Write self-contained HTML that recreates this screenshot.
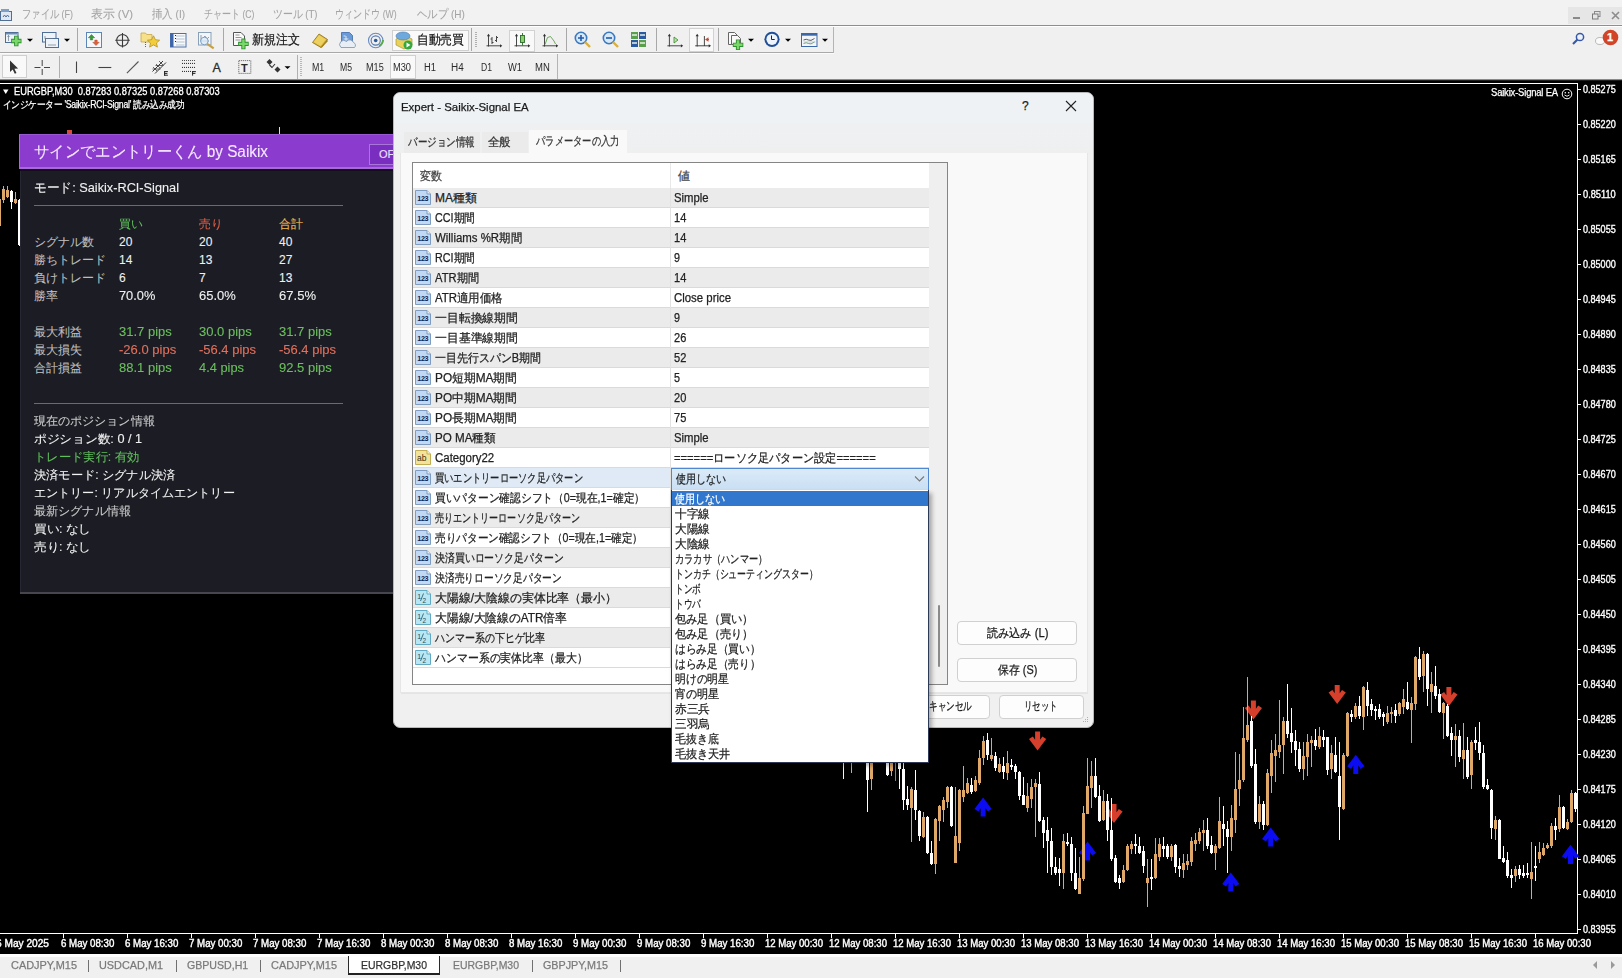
<!DOCTYPE html>
<html><head><meta charset="utf-8">
<style>
*{box-sizing:border-box}
html,body{margin:0;padding:0}
body{width:1622px;height:978px;overflow:hidden;position:relative;background:#f0f0f0;font-family:"Liberation Sans",sans-serif;color:#000}
.a{position:absolute}
.t{position:absolute;white-space:nowrap;line-height:1;-webkit-text-stroke:0.25px currentColor}
.menu{left:0;top:0;width:1622px;height:25px;background:#f2f2f2}
.menu .t{font-size:11.5px;color:#a4a4a4;top:8.5px;-webkit-text-stroke:0.1px currentColor}
.tb{background:#f0f0f0}
.sep{position:absolute;width:1px;background:#b9b9b9}
.tf{position:absolute;font-size:10px;color:#2a2a2a;top:63px;line-height:1}
.chart{left:0;top:80px;width:1622px;height:876px;background:#000}
.px{position:absolute;left:1583px;font-size:10px;color:#fff;line-height:1;letter-spacing:0px;-webkit-text-stroke:0.35px #fff}
.tx{position:absolute;top:938.5px;font-size:10px;color:#fff;line-height:1;-webkit-text-stroke:0.4px #fff}
.pn{-webkit-text-stroke:0.1px currentColor !important}
.tabs .t{font-size:11px;color:#7a7a7a;top:960px}
.tabs .sp{position:absolute;top:960px;width:1px;height:12px;background:#707070}
</style></head><body>

<!-- menu bar -->
<div class="a menu">
 <svg class="a" style="left:0;top:8px" width="13" height="14" viewBox="0 0 13 14"><rect x="0.5" y="3.5" width="11" height="9" fill="#dfe8f2" stroke="#4f6f95"/><rect x="1" y="1" width="8" height="3" fill="#7fa0c4"/><path d="M3 9 l1.5 -2 l1.5 2 l1.5 -2 l1.5 2" stroke="#4f6f95" fill="none"/></svg>
 <div class="t" style="left:22px;--w:51px;transform:scaleX(0.7740);transform-origin:0 50%">ファイル (F)</div>
 <div class="t" style="left:91px;--w:42px;transform:scaleX(0.9875);transform-origin:0 50%">表示 (V)</div>
 <div class="t" style="left:152px;--w:33px;transform:scaleX(0.8670);transform-origin:0 50%">挿入 (I)</div>
 <div class="t" style="left:204px;--w:50.5px;transform:scaleX(0.7518);transform-origin:0 50%">チャート (C)</div>
 <div class="t" style="left:273px;--w:44.5px;transform:scaleX(0.8257);transform-origin:0 50%">ツール (T)</div>
 <div class="t" style="left:335px;--w:61.6px;transform:scaleX(0.7538);transform-origin:0 50%">ウィンドウ (W)</div>
 <div class="t" style="left:417px;--w:47.8px;transform:scaleX(0.8664);transform-origin:0 50%">ヘルプ (H)</div>
 <div class="a" style="left:1568px;top:7px;width:54px;height:17px;background:#e6e6e6"></div>
 <div class="a" style="left:1573px;top:17px;width:7px;height:1.5px;background:#8a8a8a"></div>
 <svg class="a" style="left:1592px;top:11px" width="9" height="9"><rect x="2.5" y="0.5" width="5.5" height="5" fill="none" stroke="#8a8a8a"/><rect x="0.5" y="3" width="5.5" height="5" fill="#e6e6e6" stroke="#7a7a7a"/></svg>
 <svg class="a" style="left:1611px;top:11px" width="9" height="9"><path d="M1 1 L8 8 M8 1 L1 8" stroke="#8c8c8c" stroke-width="1.6"/></svg>
</div>
<div class="a" style="left:0;top:25px;width:1622px;height:1px;background:#8e8e8e"></div>
<div class="a" style="left:0;top:26px;width:1622px;height:1px;background:#fff"></div>
<!-- toolbar rows -->
<div class="a tb" style="left:0;top:27px;width:1622px;height:53px"></div>
<div class="a" style="left:0;top:52px;width:834px;height:1px;background:#a9a9a9"></div>
<div class="a" style="left:0;top:53px;width:834px;height:1px;background:#fbfbfb"></div>
<div class="a" style="left:833px;top:27px;width:1px;height:26px;background:#b4b4b4"></div>
<div class="a" style="left:557px;top:54px;width:1px;height:25px;background:#b4b4b4"></div>
<div class="a" style="left:0;top:79px;width:1622px;height:1px;background:#8a8a8a"></div>

<!-- row1 icons -->
<svg class="a" style="left:0;top:27px" width="840" height="25" viewBox="0 27 840 25">
 <!-- new chart -->
 <rect x="5.5" y="32.5" width="12.5" height="10" fill="#eef3f9" stroke="#4d6f98"/>
 <rect x="6" y="33" width="11.5" height="1.5" fill="#6f8fb5"/>
 <path d="M8.5 35.5 v5.5 M7.5 37 l1 -1.5 l1 1.5" stroke="#6a7a8a" fill="none" stroke-width="0.7"/>
 <path d="M16.3 35.8 v10.4 M11.1 41 h10.4" stroke="#2e8f2e" stroke-width="4.4"/>
 <path d="M16.3 36.6 v8.8 M11.9 41 h8.8" stroke="#7ad86a" stroke-width="2.6"/>
 <path d="M27 38.8 h6 l-3 3z" fill="#000"/>
 <!-- profiles -->
 <rect x="42.5" y="32.5" width="13.5" height="9.5" fill="#eef3f9" stroke="#4d6f98"/>
 <rect x="45.5" y="38.5" width="13" height="9" fill="#eef3f9" stroke="#4d6f98"/>
 <path d="M45 36 v3 M45 38.5 h8 M48 45 h8" stroke="#6a7a8a" stroke-width="0.7"/>
 <path d="M64 38.8 h6 l-3 3z" fill="#000"/>
 <line x1="77.5" y1="28" x2="77.5" y2="51" stroke="#a8a8a8"/>
 <!-- market watch -->
 <rect x="86.5" y="32.5" width="15" height="15" fill="#f4f7fb" stroke="#5d86b8"/>
 <path d="M91.5 34.5 l3.2 3.2 h-2 v2.2 h-2.4 v-2.2 h-2z" fill="#3a9a3a" stroke="#2a7a2a" stroke-width="0.5"/>
 <path d="M96 45.5 l3.2 -3.2 h-2 v-2.2 h-2.4 v2.2 h-2z" fill="#e0603a" stroke="#b04a2a" stroke-width="0.5"/>
 <!-- crosshair -->
 <circle cx="122.5" cy="40.3" r="5.8" fill="none" stroke="#3a3a3a" stroke-width="1.1"/>
 <path d="M122.5 33 v14.6 M115.2 40.3 h14.6" stroke="#3a3a3a" stroke-width="1.1"/>
 <!-- navigator -->
 <path d="M141 33 h4.5 l1.2 1.5 h5.3 v7.5 h-11z" fill="#f6e08a" stroke="#c9a640" stroke-width="0.8"/>
 <path d="M145.5 42 v5.5" stroke="#444" stroke-width="0.8" stroke-dasharray="1 1"/>
 <path d="M153.5 35.8 l1.9 3.9 l4.2 0.5 l-3.1 2.8 l0.9 4.1 l-3.9 -2.2 l-3.9 2.2 l0.9 -4.1 l-3.1 -2.8 l4.2 -0.5z" fill="#f2cf3a" stroke="#b89020" stroke-width="0.8"/>
 <!-- terminal -->
 <rect x="170.5" y="33.5" width="15.5" height="13.5" fill="#f8fafd" stroke="#4a70a8"/>
 <rect x="170.5" y="33.5" width="3" height="13.5" fill="#3d65a8"/>
 <path d="M176 36 h8.5 M176 39 h8.5 M176 42 h8.5 M176 45 h8.5" stroke="#9aa8b8" stroke-width="0.7"/>
 <path d="M175 35.5 h1 M175 38.5 h1 M175 41.5 h1" stroke="#222" stroke-width="1"/>
 <!-- tester -->
 <rect x="198.5" y="32.5" width="12.5" height="12.5" fill="#f2f5f9" stroke="#8aa0b8"/>
 <path d="M201 35 v6 M201 41 h8 M203 38 l2 -2 l2 3 l2 -2" stroke="#6a7a8a" stroke-width="0.7" fill="none"/>
 <circle cx="204.4" cy="41" r="3.8" fill="#dcecf8" fill-opacity="0.8" stroke="#7aa0c8" stroke-width="1"/>
 <path d="M207.2 43.8 l6.5 4.5" stroke="#c8a040" stroke-width="2.2"/>
 <line x1="223.5" y1="28" x2="223.5" y2="51" stroke="#a8a8a8"/>
 <!-- new order -->
 <path d="M233.5 32.5 h7.5 l3.5 3.5 v9.5 h-11z" fill="#fafafa" stroke="#555"/>
 <path d="M235.5 35 h4 M235.5 37.5 h6 M235.5 40 h5" stroke="#888" stroke-width="0.9"/>
 <path d="M243.4 38.6 v10.6 M238.1 43.9 h10.6" stroke="#2e8f2e" stroke-width="4.2"/>
 <path d="M243.4 39.4 v9 M238.9 43.9 h9" stroke="#7ad86a" stroke-width="2.4"/>
 <!-- gold -->
 <path d="M312.5 42.5 l6.5 -8.5 l8.5 5.5 l-6.5 8z" fill="#d8b030" stroke="#8a6a10" stroke-width="0.8"/>
 <path d="M313.5 42 l5.5 -7 l7 4.5 l-5.5 6.5z" fill="#ecd060"/>
 <path d="M321 47.5 l6.5 -8 v2 l-6 6.5z" fill="#9a7a18"/>
 <!-- signals cloud -->
 <path d="M341.5 32.5 h8 l3 3 v8 h-11z" fill="#6a9ad8" stroke="#3a6aa8" stroke-width="0.8"/>
 <path d="M343.5 36 h2 M343.5 39 h5 M346 36 v5" stroke="#e8f0fa" stroke-width="0.9"/>
 <path d="M341 47.5 h13.5 a3 3 0 0 0 -1 -5 a4 4 0 0 0 -7 -1 a3 3 0 0 0 -5.5 6z" fill="#e8eef5" stroke="#7a90a8" stroke-width="0.8"/>
 <!-- radio -->
 <circle cx="375.7" cy="40.5" r="7.2" fill="none" stroke="#6a8ac0" stroke-width="1.1"/>
 <circle cx="375.7" cy="40.5" r="4.6" fill="none" stroke="#5478b0" stroke-width="1.1"/>
 <path d="M379 46 a7.2 7.2 0 0 0 4 -6" stroke="#5aaa4a" stroke-width="2" fill="none"/>
 <circle cx="375.7" cy="40.5" r="1.8" fill="#2a5a98"/>
 <!-- autotrading box -->
 <rect x="392.5" y="30.5" width="76" height="20" fill="#fafafa" stroke="#cfcfcf"/>
 <path d="M396 39 l8 -4 l8 4 v6 l-8 4 l-8 -4z" fill="#e8d25a" stroke="#9a8a30" stroke-width="0.6"/>
 <ellipse cx="403" cy="36" rx="7" ry="4" fill="#6fa8dc" stroke="#4a7ab0" stroke-width="0.6"/>
 <circle cx="408" cy="45" r="4.5" fill="#34a83a"/>
 <path d="M406.5 42.5 l4 2.5 l-4 2.5z" fill="#fff"/>
 <line x1="471.5" y1="28" x2="471.5" y2="51" stroke="#a8a8a8"/>
 <path d="M476 32 v16" stroke="#b0b0b0" stroke-width="2" stroke-dasharray="1 1"/>
 <!-- bar chart -->
 <path d="M488.5 35 V46.5 M486.5 45.8 H501.0" stroke="#333" stroke-width="0.9" fill="none"/><path d="M486.9 36.2 L488.5 33.8 L490.1 36.2z M500.0 44.2 L502.3 45.8 L500.0 47.4z" fill="#333"/>
 <path d="M492 37 v7 M490.5 39 h1.5 M492 42.5 h1.5 M496.5 36 v6 M495 40.5 h1.5 M496.5 37.5 h1.5" stroke="#444" stroke-width="1"/>
 <!-- candle chart selected -->
 <rect x="509.5" y="30.5" width="25" height="21" fill="#f9f9f9" stroke="#d2d2d2"/>
 <path d="M516.5 35 V46.5 M514.5 45.8 H529.0" stroke="#333" stroke-width="0.9" fill="none"/><path d="M514.9 36.2 L516.5 33.8 L518.1 36.2z M528.0 44.2 L530.3 45.8 L528.0 47.4z" fill="#333"/>
 <rect x="520.5" y="35.5" width="4" height="7" fill="#8ad06a" stroke="#2a6a2a" stroke-width="0.9"/>
 <path d="M522.5 33 v2.5 M522.5 42.5 v3" stroke="#2a6a2a" stroke-width="0.9"/>
 <!-- line chart -->
 <path d="M544.5 35 V46.5 M542.5 45.8 H557.0" stroke="#333" stroke-width="0.9" fill="none"/><path d="M542.9 36.2 L544.5 33.8 L546.1 36.2z M556.0 44.2 L558.3 45.8 L556.0 47.4z" fill="#333"/>
 <path d="M545 44.5 l2.5 -7 l3 -1 l3.5 4.5 l1.5 3" fill="none" stroke="#5aa04a" stroke-width="0.9"/>
 <line x1="566.5" y1="28" x2="566.5" y2="51" stroke="#a8a8a8"/>
 <!-- zoom in -->
 <circle cx="581" cy="38" r="5.7" fill="#d8e8f8" stroke="#3a78c0" stroke-width="1.6"/>
 <path d="M578 38 h6 M581 35 v6" stroke="#1f5aa8" stroke-width="1.6"/>
 <path d="M585 42 l5 5" stroke="#d9b040" stroke-width="2.4"/>
 <!-- zoom out -->
 <circle cx="609" cy="38" r="5.7" fill="#d8e8f8" stroke="#3a78c0" stroke-width="1.6"/>
 <path d="M606 38 h6" stroke="#1f5aa8" stroke-width="1.6"/>
 <path d="M613 42 l5 5" stroke="#d9b040" stroke-width="2.4"/>
 <!-- tile -->
 <rect x="631" y="32" width="7" height="7" fill="#5aa04a"/><rect x="639" y="32" width="7" height="7" fill="#2a5aa0"/>
 <rect x="631" y="40" width="7" height="7" fill="#2a5aa0"/><rect x="639" y="40" width="7" height="7" fill="#5aa04a"/>
 <path d="M632 35 h5 M640 43 h5 M632 43 h5 M640 35 h5" stroke="#e8f0e8" stroke-width="1.5"/>
 <line x1="656.5" y1="28" x2="656.5" y2="51" stroke="#a8a8a8"/>
 <!-- autoscroll -->
 <path d="M669.4 35 V46.5 M667.4 45.8 H681.9" stroke="#333" stroke-width="0.9" fill="none"/><path d="M667.8 36.2 L669.4 33.8 L671.0 36.2z M680.9 44.2 L683.1999999999999 45.8 L680.9 47.4z" fill="#333"/>
 <path d="M674 37 l4 3 l-4 3z" fill="#b8e0a8" stroke="#3a8a2a" stroke-width="0.8"/>
 <!-- chart shift selected -->
 <rect x="689.5" y="28.5" width="24" height="23" fill="#f9f9f9" stroke="#d2d2d2"/>
 <path d="M697.2 35 V46.5 M695.2 45.8 H709.7" stroke="#333" stroke-width="0.9" fill="none"/><path d="M695.6 36.2 L697.2 33.8 L698.8000000000001 36.2z M708.7 44.2 L711.0 45.8 L708.7 47.4z" fill="#333"/>
 <path d="M704.4 36 v10" stroke="#333" stroke-width="0.9"/>
 <path d="M705 39.5 l3.5 -2.2 v4.4z" fill="#c84a3a"/>
 <path d="M707 39.5 h2" stroke="#c84a3a"/>
 <line x1="718.5" y1="28" x2="718.5" y2="51" stroke="#a8a8a8"/>
 <!-- indicators -->
 <path d="M728.5 32.5 h6 l3 3 v9 h-9z" fill="#fafafa" stroke="#666"/>
 <path d="M731.5 35.5 h6 l3 3 v6 h-9z" fill="#fafafa" stroke="#666"/>
 <path d="M738 39.5 v10.5 M732.8 44.8 h10.5" stroke="#2e8f2e" stroke-width="4.2"/>
 <path d="M738 40.3 v8.9 M733.6 44.8 h8.9" stroke="#7ad86a" stroke-width="2.4"/>
 <path d="M748 38.8 h6 l-3 3z" fill="#000"/>
 <!-- clock -->
 <circle cx="772" cy="39.3" r="7.6" fill="#1f4f98"/>
 <circle cx="772" cy="39.3" r="5.6" fill="#eef4fb"/>
 <path d="M771.5 35.5 v4 h3.2" stroke="#222" stroke-width="1" fill="none"/>
 <path d="M785 38.8 h6 l-3 3z" fill="#000"/>
 <!-- templates -->
 <rect x="801.5" y="33.5" width="15.5" height="13" fill="#f2f6fa" stroke="#3b68a8"/>
 <rect x="801.5" y="33.5" width="15.5" height="2.2" fill="#3b68a8"/>
 <path d="M803.5 40 q3 -1.5 5 0 t6 -1.5" fill="none" stroke="#333" stroke-width="0.8"/>
 <path d="M803.5 43.5 q3 -1.5 5 0 t6 -1.5" fill="none" stroke="#4a9a3a" stroke-width="0.8"/>
 <path d="M803.5 42 h12" stroke="#9ab0c8" stroke-width="0.6"/>
 <path d="M822 38.8 h6 l-3 3z" fill="#000"/>
</svg>
<div class="t" style="left:252px;top:33.5px;font-size:12.5px;color:#1a1a1a;--w:48px;transform:scaleX(0.9231);transform-origin:0 50%">新規注文</div>
<div class="t" style="left:417px;top:33.5px;font-size:12.5px;color:#1a1a1a;--w:47px;transform:scaleX(0.9038);transform-origin:0 50%">自動売買</div>
<!-- right icons -->
<svg class="a" style="left:1568px;top:29px" width="54" height="20" viewBox="1568 29 54 20">
 <circle cx="1580" cy="37" r="3.6" fill="#eef3fb" stroke="#3558a8" stroke-width="1.5"/>
 <path d="M1577.5 39.5 l-4.5 4.5" stroke="#3558a8" stroke-width="2.2"/>
 <ellipse cx="1600" cy="41" rx="4.5" ry="3.5" fill="#fafafa" stroke="#aaa" stroke-width="0.8"/>
 <circle cx="1610.5" cy="37.5" r="7.8" fill="#d24428"/>
</svg>
<div class="t" style="left:1607px;top:32px;font-size:11px;font-weight:bold;color:#fff">1</div>
<!-- row2 icons -->
<svg class="a" style="left:0;top:53px" width="600" height="27" viewBox="0 53 600 27">
 <rect x="2.5" y="55.5" width="24" height="22" fill="#f9f9f9" stroke="#cfcfcf"/>
 <path d="M10 60.5 l0 11.5 l2.7 -2.6 l2.1 4.4 l1.7 -0.8 l-2.1 -4.2 l3.7 -0.2z" fill="#333"/>
 <path d="M42.2 60 v6 M42.2 69 v6 M34.5 67.5 h6 M44 67.5 h6" stroke="#444" stroke-width="1"/>
 <line x1="59.5" y1="56" x2="59.5" y2="78" stroke="#b0b0b0"/>
 <path d="M76.5 61.5 v11.5" stroke="#444" stroke-width="1.1"/>
 <path d="M98.4 67.5 h12.9" stroke="#444" stroke-width="1.1"/>
 <path d="M126.9 73.2 L138.5 61.5" stroke="#555" stroke-width="1.1"/>
 <path d="M152.5 71.5 L163 61 M155 73.5 L166 62.5" stroke="#333" stroke-width="1"/>
 <path d="M153 67 l4 4 M156 64 l4 4 M159 61 l4 4 M152.5 69 h8 M155.5 65.5 h8" stroke="#444" stroke-width="0.8"/>
 <path d="M164.6 71.1 v4.6 M164.1 71.6 h3.8 M164.1 73.4 h3.3 M164.1 75.2 h3.8" stroke="#222" stroke-width="1"/>
 <g fill="#333"><circle cx="182.5" cy="60.5" r="0.55"/><circle cx="184.5" cy="60.5" r="0.55"/><circle cx="186.5" cy="60.5" r="0.55"/><circle cx="188.5" cy="60.5" r="0.55"/><circle cx="190.5" cy="60.5" r="0.55"/><circle cx="192.5" cy="60.5" r="0.55"/><circle cx="194.5" cy="60.5" r="0.55"/><circle cx="182.5" cy="63.4" r="0.55"/><circle cx="184.5" cy="63.4" r="0.55"/><circle cx="186.5" cy="63.4" r="0.55"/><circle cx="188.5" cy="63.4" r="0.55"/><circle cx="190.5" cy="63.4" r="0.55"/><circle cx="192.5" cy="63.4" r="0.55"/><circle cx="194.5" cy="63.4" r="0.55"/><circle cx="182.5" cy="67.4" r="0.55"/><circle cx="184.5" cy="67.4" r="0.55"/><circle cx="186.5" cy="67.4" r="0.55"/><circle cx="188.5" cy="67.4" r="0.55"/><circle cx="190.5" cy="67.4" r="0.55"/><circle cx="192.5" cy="67.4" r="0.55"/><circle cx="194.5" cy="67.4" r="0.55"/><circle cx="182.5" cy="71.4" r="0.55"/><circle cx="184.5" cy="71.4" r="0.55"/><circle cx="186.5" cy="71.4" r="0.55"/><circle cx="188.5" cy="71.4" r="0.55"/><circle cx="190.5" cy="71.4" r="0.55"/></g>
 <path d="M192.6 71.1 v4.6 M192.1 71.6 h3.8 M192.1 73.4 h3.3" stroke="#222" stroke-width="1"/>
 <text x="212.5" y="72" font-size="12.5" font-family="Liberation Sans" fill="#2a2a2a" stroke="#2a2a2a" stroke-width="0.3">A</text>
 <rect x="238.8" y="60.6" width="12" height="12.8" fill="none" stroke="#444" stroke-width="0.9" stroke-dasharray="1 1"/>
 <text x="241" y="71.5" font-size="11" font-family="Liberation Sans" font-weight="bold" fill="#2a2a2a">T</text>
 <path d="M266.5 62 l3 -3 l3 3 l-3 3z M274.5 69.5 l3 -3 l3 3 l-3 3z" fill="#333"/>
 <path d="M269.5 65 l2.5 2.5 l3 -3.5" stroke="#333" stroke-width="1.1" fill="none"/>
 <path d="M284.5 66.3 h6 l-3 2.8z" fill="#000"/>
 <line x1="297.5" y1="55" x2="297.5" y2="79" stroke="#b0b0b0"/>
 <path d="M301 57 v20" stroke="#b8b8b8" stroke-width="2" stroke-dasharray="1 1"/>
 <rect x="390.5" y="55.5" width="25" height="23" fill="#f9f9f9" stroke="#d0d0d0"/>
</svg>
<div class="tf" style="left:312px;--w:12.3px;transform:scaleX(0.8845);transform-origin:0 50%">M1</div>
<div class="tf" style="left:340px;--w:12px;transform:scaleX(0.8629);transform-origin:0 50%">M5</div>
<div class="tf" style="left:366px;--w:17.7px;transform:scaleX(0.9099);transform-origin:0 50%">M15</div>
<div class="tf" style="left:393px;--w:18px;transform:scaleX(0.9253);transform-origin:0 50%">M30</div>
<div class="tf" style="left:424px;--w:12px;transform:scaleX(0.9377);transform-origin:0 50%">H1</div>
<div class="tf" style="left:451px;--w:12.7px;transform:scaleX(0.9924);transform-origin:0 50%">H4</div>
<div class="tf" style="left:481px;--w:11px;transform:scaleX(0.8596);transform-origin:0 50%">D1</div>
<div class="tf" style="left:508px;--w:14px;transform:scaleX(0.9333);transform-origin:0 50%">W1</div>
<div class="tf" style="left:535px;--w:14.8px;transform:scaleX(0.9510);transform-origin:0 50%">MN</div>

<!-- chart background -->
<div class="a chart"></div>
<div class="a" style="left:0;top:80px;width:1622px;height:1px;background:#1e1e1e"></div>
<div class="a" style="left:0;top:83px;width:1578px;height:1px;background:#fff"></div>
<div class="a" style="left:1577px;top:83px;width:1px;height:851px;background:#fff"></div>
<div class="a" style="left:0;top:933px;width:1578px;height:1px;background:#fff"></div>
<div class="a" style="left:0;top:954px;width:1622px;height:3px;background:#fdfdfd"></div>
<svg class="a" style="left:3px;top:89px" width="6" height="6"><path d="M0 0.5 H5.5 L2.75 5z" fill="#fff"/></svg>
<div class="t" style="left:14px;top:87px;font-size:10px;color:#fff;-webkit-text-stroke:0.3px #fff;--w:205.7px;transform:scaleX(0.9280);transform-origin:0 50%">EURGBP,M30&nbsp; 0.87283 0.87325 0.87268 0.87303</div>
<div class="t" style="left:3px;top:99.5px;font-size:10px;color:#fff;letter-spacing:-0.3px;--w:181px;transform:scaleX(0.8722);transform-origin:0 50%">インジケーター 'Saikix-RCI-Signal' 読み込み成功</div>
<div class="t" style="left:1491px;top:88px;font-size:10px;color:#fff;letter-spacing:-0.2px;--w:67px;transform:scaleX(0.9472);transform-origin:0 50%">Saikix-Signal EA</div>
<svg class="a" style="left:1561px;top:88px" width="12" height="12"><circle cx="6" cy="6" r="4.8" fill="none" stroke="#fff" stroke-width="1"/><circle cx="4.3" cy="4.8" r="0.8" fill="#fff"/><circle cx="7.7" cy="4.8" r="0.8" fill="#fff"/><path d="M3.5 7 q2.5 2.5 5 0" stroke="#fff" fill="none" stroke-width="0.9"/></svg>

<div class="a" style="left:1578px;top:89.2px;width:3px;height:1px;background:#fff"></div>
<div class="px" style="top:84.8px;--w:32.7px;transform:scaleX(0.9044);transform-origin:0 50%">0.85275</div>
<div class="a" style="left:1578px;top:124.2px;width:3px;height:1px;background:#fff"></div>
<div class="px" style="top:119.8px;--w:32.7px;transform:scaleX(0.9044);transform-origin:0 50%">0.85220</div>
<div class="a" style="left:1578px;top:159.2px;width:3px;height:1px;background:#fff"></div>
<div class="px" style="top:154.8px;--w:32.7px;transform:scaleX(0.9044);transform-origin:0 50%">0.85165</div>
<div class="a" style="left:1578px;top:194.2px;width:3px;height:1px;background:#fff"></div>
<div class="px" style="top:189.8px;--w:32.7px;transform:scaleX(0.9236);transform-origin:0 50%">0.85110</div>
<div class="a" style="left:1578px;top:229.2px;width:3px;height:1px;background:#fff"></div>
<div class="px" style="top:224.8px;--w:32.7px;transform:scaleX(0.9044);transform-origin:0 50%">0.85055</div>
<div class="a" style="left:1578px;top:264.2px;width:3px;height:1px;background:#fff"></div>
<div class="px" style="top:259.8px;--w:32.7px;transform:scaleX(0.9044);transform-origin:0 50%">0.85000</div>
<div class="a" style="left:1578px;top:299.1px;width:3px;height:1px;background:#fff"></div>
<div class="px" style="top:294.7px;--w:32.7px;transform:scaleX(0.9044);transform-origin:0 50%">0.84945</div>
<div class="a" style="left:1578px;top:334.1px;width:3px;height:1px;background:#fff"></div>
<div class="px" style="top:329.7px;--w:32.7px;transform:scaleX(0.9044);transform-origin:0 50%">0.84890</div>
<div class="a" style="left:1578px;top:369.1px;width:3px;height:1px;background:#fff"></div>
<div class="px" style="top:364.7px;--w:32.7px;transform:scaleX(0.9044);transform-origin:0 50%">0.84835</div>
<div class="a" style="left:1578px;top:404.1px;width:3px;height:1px;background:#fff"></div>
<div class="px" style="top:399.7px;--w:32.7px;transform:scaleX(0.9044);transform-origin:0 50%">0.84780</div>
<div class="a" style="left:1578px;top:439.1px;width:3px;height:1px;background:#fff"></div>
<div class="px" style="top:434.7px;--w:32.7px;transform:scaleX(0.9044);transform-origin:0 50%">0.84725</div>
<div class="a" style="left:1578px;top:474.1px;width:3px;height:1px;background:#fff"></div>
<div class="px" style="top:469.7px;--w:32.7px;transform:scaleX(0.9044);transform-origin:0 50%">0.84670</div>
<div class="a" style="left:1578px;top:509.1px;width:3px;height:1px;background:#fff"></div>
<div class="px" style="top:504.7px;--w:32.7px;transform:scaleX(0.9044);transform-origin:0 50%">0.84615</div>
<div class="a" style="left:1578px;top:544.1px;width:3px;height:1px;background:#fff"></div>
<div class="px" style="top:539.7px;--w:32.7px;transform:scaleX(0.9044);transform-origin:0 50%">0.84560</div>
<div class="a" style="left:1578px;top:579.1px;width:3px;height:1px;background:#fff"></div>
<div class="px" style="top:574.7px;--w:32.7px;transform:scaleX(0.9044);transform-origin:0 50%">0.84505</div>
<div class="a" style="left:1578px;top:614.1px;width:3px;height:1px;background:#fff"></div>
<div class="px" style="top:609.7px;--w:32.7px;transform:scaleX(0.9044);transform-origin:0 50%">0.84450</div>
<div class="a" style="left:1578px;top:649.0px;width:3px;height:1px;background:#fff"></div>
<div class="px" style="top:644.6px;--w:32.7px;transform:scaleX(0.9044);transform-origin:0 50%">0.84395</div>
<div class="a" style="left:1578px;top:684.0px;width:3px;height:1px;background:#fff"></div>
<div class="px" style="top:679.6px;--w:32.7px;transform:scaleX(0.9044);transform-origin:0 50%">0.84340</div>
<div class="a" style="left:1578px;top:719.0px;width:3px;height:1px;background:#fff"></div>
<div class="px" style="top:714.6px;--w:32.7px;transform:scaleX(0.9044);transform-origin:0 50%">0.84285</div>
<div class="a" style="left:1578px;top:754.0px;width:3px;height:1px;background:#fff"></div>
<div class="px" style="top:749.6px;--w:32.7px;transform:scaleX(0.9044);transform-origin:0 50%">0.84230</div>
<div class="a" style="left:1578px;top:789.0px;width:3px;height:1px;background:#fff"></div>
<div class="px" style="top:784.6px;--w:32.7px;transform:scaleX(0.9044);transform-origin:0 50%">0.84175</div>
<div class="a" style="left:1578px;top:824.0px;width:3px;height:1px;background:#fff"></div>
<div class="px" style="top:819.6px;--w:32.7px;transform:scaleX(0.9044);transform-origin:0 50%">0.84120</div>
<div class="a" style="left:1578px;top:859.0px;width:3px;height:1px;background:#fff"></div>
<div class="px" style="top:854.6px;--w:32.7px;transform:scaleX(0.9044);transform-origin:0 50%">0.84065</div>
<div class="a" style="left:1578px;top:894.0px;width:3px;height:1px;background:#fff"></div>
<div class="px" style="top:889.6px;--w:32.7px;transform:scaleX(0.9044);transform-origin:0 50%">0.84010</div>
<div class="a" style="left:1578px;top:929.0px;width:3px;height:1px;background:#fff"></div>
<div class="px" style="top:924.6px;--w:32.7px;transform:scaleX(0.9044);transform-origin:0 50%">0.83955</div>
<div class="tx" style="left:-4px;--w:53px;transform:scaleX(1.0141);transform-origin:0 50%">6 May 2025</div>
<div class="a" style="left:63px;top:934px;width:1px;height:4px;background:#fff"></div>
<div class="tx" style="left:61px;--w:53.3px;transform:scaleX(0.9683);transform-origin:0 50%">6 May 08:30</div>
<div class="a" style="left:127px;top:934px;width:1px;height:4px;background:#fff"></div>
<div class="tx" style="left:125px;--w:53.3px;transform:scaleX(0.9683);transform-origin:0 50%">6 May 16:30</div>
<div class="a" style="left:191px;top:934px;width:1px;height:4px;background:#fff"></div>
<div class="tx" style="left:189px;--w:53.3px;transform:scaleX(0.9683);transform-origin:0 50%">7 May 00:30</div>
<div class="a" style="left:255px;top:934px;width:1px;height:4px;background:#fff"></div>
<div class="tx" style="left:253px;--w:53.3px;transform:scaleX(0.9683);transform-origin:0 50%">7 May 08:30</div>
<div class="a" style="left:319px;top:934px;width:1px;height:4px;background:#fff"></div>
<div class="tx" style="left:317px;--w:53.3px;transform:scaleX(0.9683);transform-origin:0 50%">7 May 16:30</div>
<div class="a" style="left:383px;top:934px;width:1px;height:4px;background:#fff"></div>
<div class="tx" style="left:381px;--w:53.3px;transform:scaleX(0.9683);transform-origin:0 50%">8 May 00:30</div>
<div class="a" style="left:447px;top:934px;width:1px;height:4px;background:#fff"></div>
<div class="tx" style="left:445px;--w:53.3px;transform:scaleX(0.9683);transform-origin:0 50%">8 May 08:30</div>
<div class="a" style="left:511px;top:934px;width:1px;height:4px;background:#fff"></div>
<div class="tx" style="left:509px;--w:53.3px;transform:scaleX(0.9683);transform-origin:0 50%">8 May 16:30</div>
<div class="a" style="left:575px;top:934px;width:1px;height:4px;background:#fff"></div>
<div class="tx" style="left:573px;--w:53.3px;transform:scaleX(0.9683);transform-origin:0 50%">9 May 00:30</div>
<div class="a" style="left:639px;top:934px;width:1px;height:4px;background:#fff"></div>
<div class="tx" style="left:637px;--w:53.3px;transform:scaleX(0.9683);transform-origin:0 50%">9 May 08:30</div>
<div class="a" style="left:703px;top:934px;width:1px;height:4px;background:#fff"></div>
<div class="tx" style="left:701px;--w:53.3px;transform:scaleX(0.9683);transform-origin:0 50%">9 May 16:30</div>
<div class="a" style="left:767px;top:934px;width:1px;height:4px;background:#fff"></div>
<div class="tx" style="left:765px;--w:58px;transform:scaleX(0.9569);transform-origin:0 50%">12 May 00:30</div>
<div class="a" style="left:831px;top:934px;width:1px;height:4px;background:#fff"></div>
<div class="tx" style="left:829px;--w:58px;transform:scaleX(0.9569);transform-origin:0 50%">12 May 08:30</div>
<div class="a" style="left:895px;top:934px;width:1px;height:4px;background:#fff"></div>
<div class="tx" style="left:893px;--w:58px;transform:scaleX(0.9569);transform-origin:0 50%">12 May 16:30</div>
<div class="a" style="left:959px;top:934px;width:1px;height:4px;background:#fff"></div>
<div class="tx" style="left:957px;--w:58px;transform:scaleX(0.9569);transform-origin:0 50%">13 May 00:30</div>
<div class="a" style="left:1023px;top:934px;width:1px;height:4px;background:#fff"></div>
<div class="tx" style="left:1021px;--w:58px;transform:scaleX(0.9569);transform-origin:0 50%">13 May 08:30</div>
<div class="a" style="left:1087px;top:934px;width:1px;height:4px;background:#fff"></div>
<div class="tx" style="left:1085px;--w:58px;transform:scaleX(0.9569);transform-origin:0 50%">13 May 16:30</div>
<div class="a" style="left:1151px;top:934px;width:1px;height:4px;background:#fff"></div>
<div class="tx" style="left:1149px;--w:58px;transform:scaleX(0.9569);transform-origin:0 50%">14 May 00:30</div>
<div class="a" style="left:1215px;top:934px;width:1px;height:4px;background:#fff"></div>
<div class="tx" style="left:1213px;--w:58px;transform:scaleX(0.9569);transform-origin:0 50%">14 May 08:30</div>
<div class="a" style="left:1279px;top:934px;width:1px;height:4px;background:#fff"></div>
<div class="tx" style="left:1277px;--w:58px;transform:scaleX(0.9569);transform-origin:0 50%">14 May 16:30</div>
<div class="a" style="left:1343px;top:934px;width:1px;height:4px;background:#fff"></div>
<div class="tx" style="left:1341px;--w:58px;transform:scaleX(0.9569);transform-origin:0 50%">15 May 00:30</div>
<div class="a" style="left:1407px;top:934px;width:1px;height:4px;background:#fff"></div>
<div class="tx" style="left:1405px;--w:58px;transform:scaleX(0.9569);transform-origin:0 50%">15 May 08:30</div>
<div class="a" style="left:1471px;top:934px;width:1px;height:4px;background:#fff"></div>
<div class="tx" style="left:1469px;--w:58px;transform:scaleX(0.9569);transform-origin:0 50%">15 May 16:30</div>
<div class="a" style="left:1535px;top:934px;width:1px;height:4px;background:#fff"></div>
<div class="tx" style="left:1533px;--w:58px;transform:scaleX(0.9569);transform-origin:0 50%">16 May 00:30</div>
<svg class="a" style="left:0;top:0" width="1622" height="978">
<polygon points="1035.10,731.40 1040.10,731.40 1040.10,739.70 1042.40,736.40 1046.20,739.00 1037.60,750.60 1029.00,739.00 1032.80,736.40 1035.10,739.70" fill="#d63f2b"/>
<polygon points="1111.50,803.90 1116.50,803.90 1116.50,812.20 1118.80,808.90 1122.60,811.50 1114.00,823.10 1105.40,811.50 1109.20,808.90 1111.50,812.20" fill="#d63f2b"/>
<polygon points="1250.90,700.40 1255.90,700.40 1255.90,708.70 1258.20,705.40 1262.00,708.00 1253.40,719.60 1244.80,708.00 1248.60,705.40 1250.90,708.70" fill="#d63f2b"/>
<polygon points="1334.70,684.90 1339.70,684.90 1339.70,693.20 1342.00,689.90 1345.80,692.50 1337.20,704.10 1328.60,692.50 1332.40,689.90 1334.70,693.20" fill="#d63f2b"/>
<polygon points="1446.40,686.90 1451.40,686.90 1451.40,695.20 1453.70,691.90 1457.50,694.50 1448.90,706.10 1440.30,694.50 1444.10,691.90 1446.40,695.20" fill="#d63f2b"/>
<polygon points="1085.00,860.60 1090.00,860.60 1090.00,852.30 1092.30,855.60 1096.10,853.00 1087.50,841.40 1078.90,853.00 1082.70,855.60 1085.00,852.30" fill="#0c0cf2"/>
<polygon points="1228.30,891.60 1233.30,891.60 1233.30,883.30 1235.60,886.60 1239.40,884.00 1230.80,872.40 1222.20,884.00 1226.00,886.60 1228.30,883.30" fill="#0c0cf2"/>
<polygon points="1268.20,846.60 1273.20,846.60 1273.20,838.30 1275.50,841.60 1279.30,839.00 1270.70,827.40 1262.10,839.00 1265.90,841.60 1268.20,838.30" fill="#0c0cf2"/>
<polygon points="1353.30,773.90 1358.30,773.90 1358.30,765.60 1360.60,768.90 1364.40,766.30 1355.80,754.70 1347.20,766.30 1351.00,768.90 1353.30,765.60" fill="#0c0cf2"/>
<polygon points="1568.00,863.90 1573.00,863.90 1573.00,855.60 1575.30,858.90 1579.10,856.30 1570.50,844.70 1561.90,856.30 1565.70,858.90 1568.00,855.60" fill="#0c0cf2"/>
<polygon points="980.60,816.60 985.60,816.60 985.60,808.30 987.90,811.60 991.70,809.00 983.10,797.40 974.50,809.00 978.30,811.60 980.60,808.30" fill="#0c0cf2"/>
</svg>
<svg class="a" style="left:0;top:84px" width="1577" height="849" viewBox="0 84 1577 849" shape-rendering="crispEdges">
<rect x="-1" y="197" width="1" height="29" fill="#e0a868"/><rect x="-2" y="199" width="3" height="27" fill="#e0a868"/>
<rect x="3" y="186" width="1" height="17" fill="#e0a868"/><rect x="2" y="189" width="3" height="11" fill="#e0a868"/>
<rect x="7" y="186" width="1" height="12" fill="#e0a868"/><rect x="6" y="190" width="3" height="7" fill="#e0a868"/>
<rect x="11" y="190" width="1" height="19" fill="#ffffff"/><rect x="10" y="191" width="3" height="11" fill="#ffffff"/>
<rect x="15" y="192" width="1" height="12" fill="#e0a868"/><rect x="14" y="199" width="3" height="4" fill="#e0a868"/>
<rect x="19" y="199" width="1" height="47" fill="#ffffff"/><rect x="18" y="200" width="3" height="45" fill="#ffffff"/>
<rect x="843" y="763" width="1" height="16" fill="#f4f4f4"/>
<rect x="851" y="763" width="1" height="10" fill="#b8a8c8"/>
<rect x="867" y="763" width="1" height="49" fill="#ffffff"/><rect x="866" y="763" width="3" height="17" fill="#ffffff"/>
<rect x="871" y="763" width="1" height="27" fill="#e0a868"/><rect x="870" y="763" width="3" height="16" fill="#e0a868"/>
<rect x="887" y="763" width="1" height="13" fill="#ffffff"/><rect x="886" y="763" width="3" height="12" fill="#ffffff"/>
<rect x="891" y="763" width="1" height="13" fill="#e0a868"/><rect x="890" y="763" width="3" height="8" fill="#e0a868"/>
<rect x="895" y="763" width="1" height="18" fill="#9070b0"/>
<rect x="899" y="763" width="1" height="26" fill="#ffffff"/><rect x="898" y="763" width="3" height="6" fill="#ffffff"/>
<rect x="903" y="763" width="1" height="47" fill="#ffffff"/><rect x="902" y="769" width="3" height="31" fill="#ffffff"/>
<rect x="907" y="786" width="1" height="24" fill="#ffffff"/><rect x="906" y="799" width="3" height="6" fill="#ffffff"/>
<rect x="911" y="787" width="1" height="55" fill="#e0a868"/><rect x="910" y="789" width="3" height="19" fill="#e0a868"/>
<rect x="915" y="770" width="1" height="50" fill="#ffffff"/><rect x="914" y="790" width="3" height="20" fill="#ffffff"/>
<rect x="919" y="810" width="1" height="31" fill="#ffffff"/><rect x="918" y="811" width="3" height="25" fill="#ffffff"/>
<rect x="923" y="812" width="1" height="26" fill="#e0a868"/><rect x="922" y="817" width="3" height="20" fill="#e0a868"/>
<rect x="927" y="816" width="1" height="38" fill="#ffffff"/><rect x="926" y="817" width="3" height="36" fill="#ffffff"/>
<rect x="931" y="841" width="1" height="24" fill="#ffffff"/><rect x="930" y="853" width="3" height="11" fill="#ffffff"/>
<rect x="935" y="818" width="1" height="56" fill="#e0a868"/><rect x="934" y="819" width="3" height="45" fill="#e0a868"/>
<rect x="939" y="805" width="1" height="36" fill="#e0a868"/><rect x="938" y="806" width="3" height="15" fill="#e0a868"/>
<rect x="943" y="797" width="1" height="25" fill="#e0a868"/><rect x="942" y="800" width="3" height="10" fill="#e0a868"/>
<rect x="947" y="786" width="1" height="22" fill="#e0a868"/><rect x="946" y="787" width="3" height="15" fill="#e0a868"/>
<rect x="951" y="786" width="1" height="41" fill="#ffffff"/><rect x="950" y="787" width="3" height="39" fill="#ffffff"/>
<rect x="955" y="787" width="1" height="76" fill="#e0a868"/><rect x="954" y="836" width="3" height="27" fill="#e0a868"/>
<rect x="959" y="789" width="1" height="62" fill="#e0a868"/><rect x="958" y="790" width="3" height="53" fill="#e0a868"/>
<rect x="963" y="766" width="1" height="36" fill="#e0a868"/><rect x="962" y="790" width="3" height="7" fill="#e0a868"/>
<rect x="967" y="778" width="1" height="16" fill="#e0a868"/><rect x="966" y="783" width="3" height="10" fill="#e0a868"/>
<rect x="971" y="778" width="1" height="16" fill="#ffffff"/><rect x="970" y="785" width="3" height="7" fill="#ffffff"/>
<rect x="975" y="776" width="1" height="16" fill="#e0a868"/><rect x="974" y="780" width="3" height="11" fill="#e0a868"/>
<rect x="979" y="750" width="1" height="35" fill="#e0a868"/><rect x="978" y="758" width="3" height="25" fill="#e0a868"/>
<rect x="983" y="736" width="1" height="29" fill="#e0a868"/><rect x="982" y="741" width="3" height="17" fill="#e0a868"/>
<rect x="987" y="733" width="1" height="27" fill="#ffffff"/><rect x="986" y="740" width="3" height="15" fill="#ffffff"/>
<rect x="991" y="738" width="1" height="23" fill="#e0a868"/><rect x="990" y="755" width="3" height="4" fill="#e0a868"/>
<rect x="995" y="752" width="1" height="19" fill="#ffffff"/><rect x="994" y="756" width="3" height="12" fill="#ffffff"/>
<rect x="999" y="758" width="1" height="15" fill="#e0a868"/><rect x="998" y="764" width="3" height="8" fill="#e0a868"/>
<rect x="1003" y="757" width="1" height="22" fill="#ffffff"/><rect x="1002" y="766" width="3" height="6" fill="#ffffff"/>
<rect x="1007" y="751" width="1" height="29" fill="#e0a868"/><rect x="1006" y="763" width="3" height="10" fill="#e0a868"/>
<rect x="1011" y="759" width="1" height="11" fill="#ffffff"/><rect x="1010" y="765" width="3" height="2" fill="#ffffff"/>
<rect x="1015" y="764" width="1" height="15" fill="#ffffff"/><rect x="1014" y="766" width="3" height="6" fill="#ffffff"/>
<rect x="1019" y="771" width="1" height="29" fill="#ffffff"/><rect x="1018" y="772" width="3" height="24" fill="#ffffff"/>
<rect x="1023" y="777" width="1" height="28" fill="#ffffff"/><rect x="1022" y="795" width="3" height="10" fill="#ffffff"/>
<rect x="1027" y="783" width="1" height="29" fill="#e0a868"/><rect x="1026" y="796" width="3" height="12" fill="#e0a868"/>
<rect x="1031" y="779" width="1" height="29" fill="#e0a868"/><rect x="1030" y="787" width="3" height="12" fill="#e0a868"/>
<rect x="1035" y="779" width="1" height="58" fill="#e0a868"/><rect x="1034" y="783" width="3" height="4" fill="#e0a868"/>
<rect x="1039" y="772" width="1" height="50" fill="#ffffff"/><rect x="1038" y="784" width="3" height="37" fill="#ffffff"/>
<rect x="1043" y="817" width="1" height="31" fill="#ffffff"/><rect x="1042" y="820" width="3" height="13" fill="#ffffff"/>
<rect x="1047" y="817" width="1" height="56" fill="#ffffff"/><rect x="1046" y="830" width="3" height="11" fill="#ffffff"/>
<rect x="1051" y="828" width="1" height="47" fill="#ffffff"/><rect x="1050" y="841" width="3" height="26" fill="#ffffff"/>
<rect x="1055" y="857" width="1" height="18" fill="#ffffff"/><rect x="1054" y="867" width="3" height="6" fill="#ffffff"/>
<rect x="1059" y="858" width="1" height="28" fill="#ffffff"/><rect x="1058" y="869" width="3" height="4" fill="#ffffff"/>
<rect x="1063" y="834" width="1" height="55" fill="#e0a868"/><rect x="1062" y="841" width="3" height="32" fill="#e0a868"/>
<rect x="1067" y="833" width="1" height="13" fill="#ffffff"/><rect x="1066" y="842" width="3" height="2" fill="#ffffff"/>
<rect x="1071" y="837" width="1" height="44" fill="#ffffff"/><rect x="1070" y="844" width="3" height="29" fill="#ffffff"/>
<rect x="1075" y="848" width="1" height="42" fill="#ffffff"/><rect x="1074" y="873" width="3" height="16" fill="#ffffff"/>
<rect x="1079" y="857" width="1" height="37" fill="#e0a868"/><rect x="1078" y="878" width="3" height="16" fill="#e0a868"/>
<rect x="1083" y="806" width="1" height="75" fill="#e0a868"/><rect x="1082" y="813" width="3" height="66" fill="#e0a868"/>
<rect x="1087" y="758" width="1" height="56" fill="#e0a868"/><rect x="1086" y="786" width="3" height="28" fill="#e0a868"/>
<rect x="1091" y="761" width="1" height="47" fill="#e0a868"/><rect x="1090" y="776" width="3" height="12" fill="#e0a868"/>
<rect x="1095" y="758" width="1" height="40" fill="#ffffff"/><rect x="1094" y="776" width="3" height="21" fill="#ffffff"/>
<rect x="1099" y="785" width="1" height="37" fill="#ffffff"/><rect x="1098" y="796" width="3" height="25" fill="#ffffff"/>
<rect x="1103" y="790" width="1" height="31" fill="#e0a868"/><rect x="1102" y="801" width="3" height="19" fill="#e0a868"/>
<rect x="1107" y="794" width="1" height="47" fill="#ffffff"/><rect x="1106" y="801" width="3" height="29" fill="#ffffff"/>
<rect x="1111" y="798" width="1" height="63" fill="#ffffff"/><rect x="1110" y="830" width="3" height="29" fill="#ffffff"/>
<rect x="1115" y="855" width="1" height="28" fill="#ffffff"/><rect x="1114" y="858" width="3" height="24" fill="#ffffff"/>
<rect x="1119" y="875" width="1" height="14" fill="#ffffff"/><rect x="1118" y="878" width="3" height="5" fill="#ffffff"/>
<rect x="1123" y="865" width="1" height="18" fill="#e0a868"/><rect x="1122" y="870" width="3" height="12" fill="#e0a868"/>
<rect x="1127" y="844" width="1" height="27" fill="#e0a868"/><rect x="1126" y="846" width="3" height="24" fill="#e0a868"/>
<rect x="1131" y="841" width="1" height="13" fill="#e0a868"/><rect x="1130" y="844" width="3" height="5" fill="#e0a868"/>
<rect x="1135" y="834" width="1" height="20" fill="#ffffff"/><rect x="1134" y="844" width="3" height="2" fill="#ffffff"/>
<rect x="1139" y="837" width="1" height="17" fill="#ffffff"/><rect x="1138" y="846" width="3" height="7" fill="#ffffff"/>
<rect x="1143" y="846" width="1" height="27" fill="#ffffff"/><rect x="1142" y="851" width="3" height="15" fill="#ffffff"/>
<rect x="1147" y="859" width="1" height="48" fill="#e0a868"/><rect x="1146" y="878" width="3" height="5" fill="#e0a868"/>
<rect x="1151" y="859" width="1" height="31" fill="#ffffff"/><rect x="1150" y="877" width="3" height="2" fill="#ffffff"/>
<rect x="1155" y="838" width="1" height="41" fill="#e0a868"/><rect x="1154" y="854" width="3" height="24" fill="#e0a868"/>
<rect x="1159" y="838" width="1" height="23" fill="#e0a868"/><rect x="1158" y="844" width="3" height="13" fill="#e0a868"/>
<rect x="1163" y="837" width="1" height="20" fill="#ffffff"/><rect x="1162" y="846" width="3" height="3" fill="#ffffff"/>
<rect x="1167" y="844" width="1" height="15" fill="#ffffff"/><rect x="1166" y="846" width="3" height="11" fill="#ffffff"/>
<rect x="1171" y="844" width="1" height="17" fill="#e0a868"/><rect x="1170" y="846" width="3" height="11" fill="#e0a868"/>
<rect x="1175" y="844" width="1" height="29" fill="#ffffff"/><rect x="1174" y="845" width="3" height="22" fill="#ffffff"/>
<rect x="1179" y="858" width="1" height="19" fill="#ffffff"/><rect x="1178" y="866" width="3" height="3" fill="#ffffff"/>
<rect x="1183" y="854" width="1" height="24" fill="#e0a868"/><rect x="1182" y="863" width="3" height="7" fill="#e0a868"/>
<rect x="1187" y="854" width="1" height="16" fill="#e0a868"/><rect x="1186" y="861" width="3" height="4" fill="#e0a868"/>
<rect x="1191" y="837" width="1" height="29" fill="#e0a868"/><rect x="1190" y="841" width="3" height="21" fill="#e0a868"/>
<rect x="1195" y="833" width="1" height="18" fill="#e0a868"/><rect x="1194" y="840" width="3" height="4" fill="#e0a868"/>
<rect x="1199" y="828" width="1" height="16" fill="#e0a868"/><rect x="1198" y="832" width="3" height="9" fill="#e0a868"/>
<rect x="1203" y="820" width="1" height="31" fill="#e0a868"/><rect x="1202" y="830" width="3" height="3" fill="#e0a868"/>
<rect x="1207" y="818" width="1" height="31" fill="#ffffff"/><rect x="1206" y="830" width="3" height="16" fill="#ffffff"/>
<rect x="1211" y="836" width="1" height="18" fill="#ffffff"/><rect x="1210" y="845" width="3" height="8" fill="#ffffff"/>
<rect x="1215" y="844" width="1" height="26" fill="#e0a868"/><rect x="1214" y="846" width="3" height="7" fill="#e0a868"/>
<rect x="1219" y="797" width="1" height="52" fill="#e0a868"/><rect x="1218" y="821" width="3" height="27" fill="#e0a868"/>
<rect x="1223" y="806" width="1" height="40" fill="#ffffff"/><rect x="1222" y="824" width="3" height="5" fill="#ffffff"/>
<rect x="1227" y="821" width="1" height="52" fill="#ffffff"/><rect x="1226" y="829" width="3" height="8" fill="#ffffff"/>
<rect x="1231" y="805" width="1" height="46" fill="#e0a868"/><rect x="1230" y="818" width="3" height="19" fill="#e0a868"/>
<rect x="1235" y="752" width="1" height="81" fill="#e0a868"/><rect x="1234" y="789" width="3" height="31" fill="#e0a868"/>
<rect x="1239" y="754" width="1" height="52" fill="#e0a868"/><rect x="1238" y="780" width="3" height="9" fill="#e0a868"/>
<rect x="1243" y="707" width="1" height="75" fill="#e0a868"/><rect x="1242" y="738" width="3" height="42" fill="#e0a868"/>
<rect x="1247" y="677" width="1" height="65" fill="#e0a868"/><rect x="1246" y="725" width="3" height="15" fill="#e0a868"/>
<rect x="1251" y="716" width="1" height="52" fill="#ffffff"/><rect x="1250" y="721" width="3" height="45" fill="#ffffff"/>
<rect x="1255" y="749" width="1" height="75" fill="#ffffff"/><rect x="1254" y="764" width="3" height="58" fill="#ffffff"/>
<rect x="1259" y="796" width="1" height="33" fill="#e0a868"/><rect x="1258" y="804" width="3" height="18" fill="#e0a868"/>
<rect x="1263" y="801" width="1" height="29" fill="#ffffff"/><rect x="1262" y="804" width="3" height="21" fill="#ffffff"/>
<rect x="1267" y="769" width="1" height="57" fill="#e0a868"/><rect x="1266" y="773" width="3" height="52" fill="#e0a868"/>
<rect x="1271" y="740" width="1" height="53" fill="#e0a868"/><rect x="1270" y="753" width="3" height="23" fill="#e0a868"/>
<rect x="1275" y="734" width="1" height="48" fill="#e0a868"/><rect x="1274" y="750" width="3" height="6" fill="#e0a868"/>
<rect x="1279" y="700" width="1" height="58" fill="#e0a868"/><rect x="1278" y="745" width="3" height="7" fill="#e0a868"/>
<rect x="1283" y="717" width="1" height="57" fill="#e0a868"/><rect x="1282" y="721" width="3" height="24" fill="#e0a868"/>
<rect x="1287" y="684" width="1" height="54" fill="#ffffff"/><rect x="1286" y="721" width="3" height="13" fill="#ffffff"/>
<rect x="1291" y="708" width="1" height="45" fill="#ffffff"/><rect x="1290" y="733" width="3" height="9" fill="#ffffff"/>
<rect x="1295" y="730" width="1" height="36" fill="#ffffff"/><rect x="1294" y="741" width="3" height="9" fill="#ffffff"/>
<rect x="1299" y="742" width="1" height="30" fill="#ffffff"/><rect x="1298" y="749" width="3" height="20" fill="#ffffff"/>
<rect x="1303" y="742" width="1" height="38" fill="#e0a868"/><rect x="1302" y="756" width="3" height="13" fill="#e0a868"/>
<rect x="1307" y="734" width="1" height="42" fill="#e0a868"/><rect x="1306" y="742" width="3" height="15" fill="#e0a868"/>
<rect x="1311" y="736" width="1" height="31" fill="#e0a868"/><rect x="1310" y="740" width="3" height="3" fill="#e0a868"/>
<rect x="1315" y="729" width="1" height="21" fill="#ffffff"/><rect x="1314" y="740" width="3" height="6" fill="#ffffff"/>
<rect x="1319" y="727" width="1" height="22" fill="#e0a868"/><rect x="1318" y="736" width="3" height="11" fill="#e0a868"/>
<rect x="1323" y="730" width="1" height="17" fill="#ffffff"/><rect x="1322" y="737" width="3" height="3" fill="#ffffff"/>
<rect x="1327" y="737" width="1" height="38" fill="#ffffff"/><rect x="1326" y="737" width="3" height="33" fill="#ffffff"/>
<rect x="1331" y="745" width="1" height="34" fill="#e0a868"/><rect x="1330" y="753" width="3" height="16" fill="#e0a868"/>
<rect x="1335" y="737" width="1" height="36" fill="#ffffff"/><rect x="1334" y="755" width="3" height="17" fill="#ffffff"/>
<rect x="1339" y="742" width="1" height="98" fill="#ffffff"/><rect x="1338" y="776" width="3" height="31" fill="#ffffff"/>
<rect x="1343" y="753" width="1" height="57" fill="#e0a868"/><rect x="1342" y="755" width="3" height="54" fill="#e0a868"/>
<rect x="1347" y="712" width="1" height="45" fill="#e0a868"/><rect x="1346" y="713" width="3" height="43" fill="#e0a868"/>
<rect x="1351" y="710" width="1" height="12" fill="#ffffff"/><rect x="1350" y="714" width="3" height="3" fill="#ffffff"/>
<rect x="1355" y="703" width="1" height="16" fill="#e0a868"/><rect x="1354" y="706" width="3" height="11" fill="#e0a868"/>
<rect x="1359" y="696" width="1" height="23" fill="#ffffff"/><rect x="1358" y="706" width="3" height="10" fill="#ffffff"/>
<rect x="1363" y="686" width="1" height="44" fill="#e0a868"/><rect x="1362" y="687" width="3" height="30" fill="#e0a868"/>
<rect x="1367" y="682" width="1" height="34" fill="#ffffff"/><rect x="1366" y="690" width="3" height="16" fill="#ffffff"/>
<rect x="1371" y="699" width="1" height="17" fill="#ffffff"/><rect x="1370" y="704" width="3" height="6" fill="#ffffff"/>
<rect x="1375" y="706" width="1" height="14" fill="#ffffff"/><rect x="1374" y="709" width="3" height="2" fill="#ffffff"/>
<rect x="1379" y="704" width="1" height="15" fill="#ffffff"/><rect x="1378" y="709" width="3" height="8" fill="#ffffff"/>
<rect x="1383" y="712" width="1" height="14" fill="#ffffff"/><rect x="1382" y="714" width="3" height="3" fill="#ffffff"/>
<rect x="1387" y="706" width="1" height="18" fill="#e0a868"/><rect x="1386" y="713" width="3" height="9" fill="#e0a868"/>
<rect x="1391" y="707" width="1" height="16" fill="#e0a868"/><rect x="1390" y="712" width="3" height="2" fill="#e0a868"/>
<rect x="1395" y="704" width="1" height="19" fill="#ffffff"/><rect x="1394" y="710" width="3" height="6" fill="#ffffff"/>
<rect x="1399" y="702" width="1" height="14" fill="#e0a868"/><rect x="1398" y="703" width="3" height="11" fill="#e0a868"/>
<rect x="1403" y="689" width="1" height="25" fill="#e0a868"/><rect x="1402" y="699" width="3" height="8" fill="#e0a868"/>
<rect x="1407" y="682" width="1" height="28" fill="#ffffff"/><rect x="1406" y="702" width="3" height="7" fill="#ffffff"/>
<rect x="1411" y="697" width="1" height="46" fill="#e0a868"/><rect x="1410" y="703" width="3" height="7" fill="#e0a868"/>
<rect x="1415" y="656" width="1" height="54" fill="#e0a868"/><rect x="1414" y="657" width="3" height="47" fill="#e0a868"/>
<rect x="1419" y="647" width="1" height="33" fill="#ffffff"/><rect x="1418" y="659" width="3" height="18" fill="#ffffff"/>
<rect x="1423" y="651" width="1" height="41" fill="#e0a868"/><rect x="1422" y="654" width="3" height="22" fill="#e0a868"/>
<rect x="1427" y="653" width="1" height="53" fill="#ffffff"/><rect x="1426" y="654" width="3" height="35" fill="#ffffff"/>
<rect x="1431" y="672" width="1" height="41" fill="#e0a868"/><rect x="1430" y="684" width="3" height="8" fill="#e0a868"/>
<rect x="1435" y="666" width="1" height="33" fill="#ffffff"/><rect x="1434" y="686" width="3" height="10" fill="#ffffff"/>
<rect x="1439" y="689" width="1" height="24" fill="#ffffff"/><rect x="1438" y="694" width="3" height="18" fill="#ffffff"/>
<rect x="1443" y="702" width="1" height="37" fill="#e0a868"/><rect x="1442" y="703" width="3" height="10" fill="#e0a868"/>
<rect x="1447" y="704" width="1" height="33" fill="#ffffff"/><rect x="1446" y="706" width="3" height="30" fill="#ffffff"/>
<rect x="1451" y="727" width="1" height="29" fill="#ffffff"/><rect x="1450" y="733" width="3" height="7" fill="#ffffff"/>
<rect x="1455" y="724" width="1" height="43" fill="#e0a868"/><rect x="1454" y="736" width="3" height="4" fill="#e0a868"/>
<rect x="1459" y="730" width="1" height="32" fill="#ffffff"/><rect x="1458" y="736" width="3" height="21" fill="#ffffff"/>
<rect x="1463" y="723" width="1" height="56" fill="#e0a868"/><rect x="1462" y="750" width="3" height="9" fill="#e0a868"/>
<rect x="1467" y="737" width="1" height="42" fill="#ffffff"/><rect x="1466" y="750" width="3" height="27" fill="#ffffff"/>
<rect x="1471" y="740" width="1" height="49" fill="#e0a868"/><rect x="1470" y="742" width="3" height="33" fill="#e0a868"/>
<rect x="1475" y="727" width="1" height="23" fill="#ffffff"/><rect x="1474" y="740" width="3" height="3" fill="#ffffff"/>
<rect x="1479" y="722" width="1" height="38" fill="#ffffff"/><rect x="1478" y="742" width="3" height="11" fill="#ffffff"/>
<rect x="1483" y="745" width="1" height="44" fill="#ffffff"/><rect x="1482" y="753" width="3" height="34" fill="#ffffff"/>
<rect x="1487" y="779" width="1" height="11" fill="#ffffff"/><rect x="1486" y="785" width="3" height="4" fill="#ffffff"/>
<rect x="1491" y="789" width="1" height="50" fill="#ffffff"/><rect x="1490" y="790" width="3" height="38" fill="#ffffff"/>
<rect x="1495" y="816" width="1" height="24" fill="#e0a868"/><rect x="1494" y="820" width="3" height="9" fill="#e0a868"/>
<rect x="1499" y="819" width="1" height="40" fill="#ffffff"/><rect x="1498" y="820" width="3" height="39" fill="#ffffff"/>
<rect x="1503" y="846" width="1" height="17" fill="#ffffff"/><rect x="1502" y="858" width="3" height="4" fill="#ffffff"/>
<rect x="1507" y="852" width="1" height="26" fill="#ffffff"/><rect x="1506" y="860" width="3" height="16" fill="#ffffff"/>
<rect x="1511" y="869" width="1" height="19" fill="#ffffff"/><rect x="1510" y="875" width="3" height="3" fill="#ffffff"/>
<rect x="1515" y="866" width="1" height="16" fill="#e0a868"/><rect x="1514" y="869" width="3" height="7" fill="#e0a868"/>
<rect x="1519" y="865" width="1" height="14" fill="#ffffff"/><rect x="1518" y="869" width="3" height="6" fill="#ffffff"/>
<rect x="1523" y="865" width="1" height="13" fill="#ffffff"/><rect x="1522" y="873" width="3" height="3" fill="#ffffff"/>
<rect x="1527" y="863" width="1" height="15" fill="#ffffff"/><rect x="1526" y="873" width="3" height="2" fill="#ffffff"/>
<rect x="1531" y="842" width="1" height="57" fill="#e0a868"/><rect x="1530" y="872" width="3" height="7" fill="#e0a868"/>
<rect x="1535" y="846" width="1" height="35" fill="#ffffff"/><rect x="1534" y="866" width="3" height="2" fill="#ffffff"/>
<rect x="1539" y="842" width="1" height="21" fill="#e0a868"/><rect x="1538" y="852" width="3" height="7" fill="#e0a868"/>
<rect x="1543" y="843" width="1" height="13" fill="#e0a868"/><rect x="1542" y="848" width="3" height="7" fill="#e0a868"/>
<rect x="1547" y="843" width="1" height="6" fill="#e0a868"/><rect x="1546" y="845" width="3" height="3" fill="#e0a868"/>
<rect x="1551" y="823" width="1" height="25" fill="#e0a868"/><rect x="1550" y="826" width="3" height="20" fill="#e0a868"/>
<rect x="1555" y="818" width="1" height="22" fill="#ffffff"/><rect x="1554" y="826" width="3" height="4" fill="#ffffff"/>
<rect x="1559" y="795" width="1" height="37" fill="#e0a868"/><rect x="1558" y="807" width="3" height="22" fill="#e0a868"/>
<rect x="1563" y="806" width="1" height="23" fill="#ffffff"/><rect x="1562" y="807" width="3" height="21" fill="#ffffff"/>
<rect x="1567" y="819" width="1" height="11" fill="#e0a868"/><rect x="1566" y="822" width="3" height="7" fill="#e0a868"/>
<rect x="1571" y="790" width="1" height="33" fill="#e0a868"/><rect x="1570" y="793" width="3" height="29" fill="#e0a868"/>
<rect x="1575" y="792" width="1" height="20" fill="#ffffff"/><rect x="1574" y="793" width="3" height="16" fill="#ffffff"/>
<rect x="67" y="130" width="5" height="4" fill="#d84a3a"/>
<rect x="279" y="127" width="1" height="7" fill="#ddd"/>
</svg>
<!-- signal panel -->
<div class="a" style="left:19px;top:134px;width:380px;height:35px;background:#8b3ccf;border-left:1px solid #a070d8;border-top:1px solid #9858d4"></div>
<div class="a" style="left:19px;top:166.5px;width:380px;height:2.5px;background:#a86ad8"></div>
<div class="a" style="left:20px;top:169px;width:379px;height:423px;background:#1b1c24;border-left:1.5px solid #272731"></div><div class="a" style="left:20px;top:169px;width:373px;height:2px;background:#150d1e"></div>
<div class="a" style="left:20px;top:592px;width:379px;height:2px;background:#46464e"></div>
<div class="t pn" style="left:34px;top:144px;font-size:16px;color:#f4e8ff;--w:234px;transform:scaleX(0.9572);transform-origin:0 50%">サインでエントリーくん by Saikix</div>
<div class="a" style="left:369px;top:144px;width:40px;height:21px;border:1px solid #a876d8;background:#7a2ec0"></div>
<div class="t pn" style="left:379px;top:149px;font-size:11px;color:#f0e0ff">OFF</div>
<div class="t pn" style="left:34px;top:181px;font-size:13px;color:#f2f2f2;--w:145px;transform:scaleX(0.9791);transform-origin:0 50%">モード: Saikix-RCI-Signal</div>
<div class="a" style="left:34px;top:205px;width:309px;height:1px;background:#6a6a70"></div>
<div class="a" style="left:34px;top:403px;width:309px;height:1px;background:#6a6a70"></div>
<div style="position:absolute;left:0;top:0;font-size:12px;line-height:1">
 <div class="t pn" style="left:119px;top:218px;color:#5fbf5a;--w:23.5px;transform:scaleX(0.9792);transform-origin:0 50%">買い</div>
 <div class="t pn" style="left:199px;top:218px;color:#e2604a;--w:23.5px;transform:scaleX(0.9792);transform-origin:0 50%">売り</div>
 <div class="t pn" style="left:279px;top:218px;color:#e8b850;--w:24px;transform:scaleX(1.0000);transform-origin:0 50%">合計</div>
 <div class="t pn" style="left:34px;top:236px;color:#bdbdbd;--w:60px;transform:scaleX(1.0000);transform-origin:0 50%">シグナル数</div>
 <div class="t pn" style="left:119px;top:236px;color:#f0f0f0">20</div>
 <div class="t pn" style="left:199px;top:236px;color:#f0f0f0">20</div>
 <div class="t pn" style="left:279px;top:236px;color:#f0f0f0">40</div>
 <div class="t pn" style="left:34px;top:254px;color:#bdbdbd;--w:72px;transform:scaleX(1.0000);transform-origin:0 50%">勝ちトレード</div>
 <div class="t pn" style="left:119px;top:254px;color:#f0f0f0">14</div>
 <div class="t pn" style="left:199px;top:254px;color:#f0f0f0">13</div>
 <div class="t pn" style="left:279px;top:254px;color:#f0f0f0">27</div>
 <div class="t pn" style="left:34px;top:272px;color:#bdbdbd;--w:72px;transform:scaleX(1.0000);transform-origin:0 50%">負けトレード</div>
 <div class="t pn" style="left:119px;top:272px;color:#f0f0f0">6</div>
 <div class="t pn" style="left:199px;top:272px;color:#f0f0f0">7</div>
 <div class="t pn" style="left:279px;top:272px;color:#f0f0f0">13</div>
 <div class="t pn" style="left:34px;top:290px;color:#bdbdbd;--w:24px;transform:scaleX(1.0000);transform-origin:0 50%">勝率</div>
 <div class="t pn" style="left:119px;top:290px;color:#f0f0f0;--w:36.3px;transform:scaleX(1.0667);transform-origin:0 50%">70.0%</div>
 <div class="t pn" style="left:199px;top:290px;color:#f0f0f0;--w:36.8px;transform:scaleX(1.0814);transform-origin:0 50%">65.0%</div>
 <div class="t pn" style="left:279px;top:290px;color:#f0f0f0;--w:37px;transform:scaleX(1.0872);transform-origin:0 50%">67.5%</div>
 <div class="t pn" style="left:34px;top:326px;color:#bdbdbd;--w:48px;transform:scaleX(1.0000);transform-origin:0 50%">最大利益</div>
 <div class="t pn" style="left:119px;top:326px;color:#6cbf5e;--w:52.8px;transform:scaleX(1.0841);transform-origin:0 50%">31.7 pips</div>
 <div class="t pn" style="left:199px;top:326px;color:#6cbf5e;--w:52.8px;transform:scaleX(1.0841);transform-origin:0 50%">30.0 pips</div>
 <div class="t pn" style="left:279px;top:326px;color:#6cbf5e;--w:52.8px;transform:scaleX(1.0841);transform-origin:0 50%">31.7 pips</div>
 <div class="t pn" style="left:34px;top:344px;color:#bdbdbd;--w:48px;transform:scaleX(1.0000);transform-origin:0 50%">最大損失</div>
 <div class="t pn" style="left:119px;top:344px;color:#e2705c;--w:57.2px;transform:scaleX(1.0853);transform-origin:0 50%">-26.0 pips</div>
 <div class="t pn" style="left:199px;top:344px;color:#e2705c;--w:57px;transform:scaleX(1.0815);transform-origin:0 50%">-56.4 pips</div>
 <div class="t pn" style="left:279px;top:344px;color:#e2705c;--w:57px;transform:scaleX(1.0815);transform-origin:0 50%">-56.4 pips</div>
 <div class="t pn" style="left:34px;top:362px;color:#bdbdbd;--w:48px;transform:scaleX(1.0000);transform-origin:0 50%">合計損益</div>
 <div class="t pn" style="left:119px;top:362px;color:#6cbf5e;--w:52.8px;transform:scaleX(1.0841);transform-origin:0 50%">88.1 pips</div>
 <div class="t pn" style="left:199px;top:362px;color:#6cbf5e;--w:45px;transform:scaleX(1.0706);transform-origin:0 50%">4.4 pips</div>
 <div class="t pn" style="left:279px;top:362px;color:#6cbf5e;--w:52.8px;transform:scaleX(1.0841);transform-origin:0 50%">92.5 pips</div>
 <div class="t pn" style="left:34px;top:415px;color:#c8c8c8;--w:120.7px;transform:scaleX(1.0058);transform-origin:0 50%">現在のポジション情報</div>
 <div class="t pn" style="left:34px;top:433px;color:#f2f2f2;--w:108.2px;transform:scaleX(1.0605);transform-origin:0 50%">ポジション数: 0 / 1</div>
 <div class="t pn" style="left:34px;top:451px;color:#5fbf5a;--w:105.3px;transform:scaleX(1.0256);transform-origin:0 50%">トレード実行: 有効</div>
 <div class="t pn" style="left:34px;top:469px;color:#f2f2f2;--w:141.4px;transform:scaleX(1.0197);transform-origin:0 50%">決済モード: シグナル決済</div>
 <div class="t pn" style="left:34px;top:487px;color:#f2f2f2;--w:200.7px;transform:scaleX(1.0102);transform-origin:0 50%">エントリー: リアルタイムエントリー</div>
 <div class="t pn" style="left:34px;top:505px;color:#c8c8c8;--w:97px;transform:scaleX(1.0104);transform-origin:0 50%">最新シグナル情報</div>
 <div class="t pn" style="left:34px;top:523px;color:#f2f2f2;--w:57px;transform:scaleX(1.0426);transform-origin:0 50%">買い: なし</div>
 <div class="t pn" style="left:34px;top:541px;color:#f2f2f2;--w:57px;transform:scaleX(1.0426);transform-origin:0 50%">売り: なし</div>
</div>

<!-- dialog -->
<div class="a" style="left:393px;top:92px;width:701px;height:636px;border-radius:7px;background:#f0f0f0;border:1px solid #b8b8b8;overflow:hidden">
 <div class="a" style="left:0;top:0;width:701px;height:30px;background:#eef2f5"></div>
 <div class="a" style="left:0;top:30px;width:701px;height:31px;background:linear-gradient(#eef1f3,#efefef)"></div>
</div>
<div class="t" style="left:401px;top:101.5px;font-size:11.5px;color:#1a1a1a;--w:127.7px;transform:scaleX(0.9940);transform-origin:0 50%">Expert - Saikix-Signal EA</div>
<div class="t" style="left:1022px;top:100px;font-size:12px;color:#222">?</div>
<svg class="a" style="left:1065px;top:100px" width="12" height="12"><path d="M1 1 L11 11 M11 1 L1 11" stroke="#222" stroke-width="1.1"/></svg>
<!-- tabs -->
<div class="a" style="left:404px;top:132px;width:76px;height:21px;background:#ebebeb"></div>
<div class="a" style="left:482px;top:132px;width:46px;height:21px;background:#ebebeb"></div>
<div class="a" style="left:529px;top:130px;width:98px;height:23px;background:#f9f9f9"></div>
<div class="t" style="left:408px;top:136px;font-size:12px;color:#333;--w:66.6px;transform:scaleX(0.7929);transform-origin:0 50%">バージョン情報</div>
<div class="t" style="left:488px;top:136px;font-size:12px;color:#333;--w:23px;transform:scaleX(0.9583);transform-origin:0 50%">全般</div>
<div class="t" style="left:536px;top:135px;font-size:12px;color:#333;--w:83.3px;transform:scaleX(0.7713);transform-origin:0 50%">パラメーターの入力</div>
<!-- tab page -->
<div class="a" style="left:400px;top:153px;width:688px;height:540px;background:#f9f9f9;border:1px solid #e6e6e6;border-top:none"></div>
<!-- table -->
<div class="a" style="left:412px;top:162px;width:536px;height:523px;background:#fff;border:1px solid #858585"></div>
<div class="a" style="left:929px;top:163px;width:18px;height:521px;background:#efefef"></div>
<div class="a" style="left:937.5px;top:605px;width:2.5px;height:62px;background:#8a8a8a;border-radius:1px"></div>
<div class="a" style="left:670px;top:163px;width:1px;height:25px;background:#e8e8e8"></div>
<div class="t" style="left:420px;top:170px;font-size:12px;color:#444;--w:22px;transform:scaleX(0.9167);transform-origin:0 50%">変数</div>
<div class="t" style="left:678px;top:170px;font-size:12px;color:#444">値</div>

<div class="a" style="left:413px;top:188px;width:516px;height:20px;background:#ebebeb;border-bottom:1px solid #dadada"></div>
<div class="a" style="left:670px;top:188px;width:1px;height:20px;background:#e2e2e2"></div>
<svg class="a" style="left:415px;top:190px" width="17" height="16"><path d="M0.5 0.5 h11.5 l3.5 3.5 v10.5 h-15z" fill="#c2d9f3" stroke="#7f9cc0"/><path d="M12 0.5 v3.5 h3.5" fill="#e8f0fa" stroke="#7f9cc0"/><text x="2.2" y="10.9" font-size="7.2" font-weight="bold" font-family="Liberation Sans" fill="#0c2452" letter-spacing="-0.3">123</text></svg>
<div class="t" style="left:435px;top:192px;font-size:12px;color:#222;--w:42px;transform:scaleX(1.0000);transform-origin:0 50%">MA種類</div>
<div class="t" style="left:674px;top:192px;font-size:12px;color:#222;--w:34.6px;transform:scaleX(0.9431);transform-origin:0 50%">Simple</div>
<div class="a" style="left:413px;top:208px;width:516px;height:20px;background:#ffffff;border-bottom:1px solid #dadada"></div>
<div class="a" style="left:670px;top:208px;width:1px;height:20px;background:#e2e2e2"></div>
<svg class="a" style="left:415px;top:210px" width="17" height="16"><path d="M0.5 0.5 h11.5 l3.5 3.5 v10.5 h-15z" fill="#c2d9f3" stroke="#7f9cc0"/><path d="M12 0.5 v3.5 h3.5" fill="#e8f0fa" stroke="#7f9cc0"/><text x="2.2" y="10.9" font-size="7.2" font-weight="bold" font-family="Liberation Sans" fill="#0c2452" letter-spacing="-0.3">123</text></svg>
<div class="t" style="left:435px;top:212px;font-size:12px;color:#222;--w:40px;transform:scaleX(0.8954);transform-origin:0 50%">CCI期間</div>
<div class="t" style="left:674px;top:212px;font-size:12px;color:#222;--w:12.3px;transform:scaleX(0.9207);transform-origin:0 50%">14</div>
<div class="a" style="left:413px;top:228px;width:516px;height:20px;background:#ebebeb;border-bottom:1px solid #dadada"></div>
<div class="a" style="left:670px;top:228px;width:1px;height:20px;background:#e2e2e2"></div>
<svg class="a" style="left:415px;top:230px" width="17" height="16"><path d="M0.5 0.5 h11.5 l3.5 3.5 v10.5 h-15z" fill="#c2d9f3" stroke="#7f9cc0"/><path d="M12 0.5 v3.5 h3.5" fill="#e8f0fa" stroke="#7f9cc0"/><text x="2.2" y="10.9" font-size="7.2" font-weight="bold" font-family="Liberation Sans" fill="#0c2452" letter-spacing="-0.3">123</text></svg>
<div class="t" style="left:435px;top:232px;font-size:12px;color:#222;--w:87px;transform:scaleX(0.9524);transform-origin:0 50%">Williams %R期間</div>
<div class="t" style="left:674px;top:232px;font-size:12px;color:#222;--w:12.3px;transform:scaleX(0.9207);transform-origin:0 50%">14</div>
<div class="a" style="left:413px;top:248px;width:516px;height:20px;background:#ffffff;border-bottom:1px solid #dadada"></div>
<div class="a" style="left:670px;top:248px;width:1px;height:20px;background:#e2e2e2"></div>
<svg class="a" style="left:415px;top:250px" width="17" height="16"><path d="M0.5 0.5 h11.5 l3.5 3.5 v10.5 h-15z" fill="#c2d9f3" stroke="#7f9cc0"/><path d="M12 0.5 v3.5 h3.5" fill="#e8f0fa" stroke="#7f9cc0"/><text x="2.2" y="10.9" font-size="7.2" font-weight="bold" font-family="Liberation Sans" fill="#0c2452" letter-spacing="-0.3">123</text></svg>
<div class="t" style="left:435px;top:252px;font-size:12px;color:#222;--w:40px;transform:scaleX(0.8954);transform-origin:0 50%">RCI期間</div>
<div class="t" style="left:674px;top:252px;font-size:12px;color:#222;--w:6px;transform:scaleX(0.8972);transform-origin:0 50%">9</div>
<div class="a" style="left:413px;top:268px;width:516px;height:20px;background:#ebebeb;border-bottom:1px solid #dadada"></div>
<div class="a" style="left:670px;top:268px;width:1px;height:20px;background:#e2e2e2"></div>
<svg class="a" style="left:415px;top:270px" width="17" height="16"><path d="M0.5 0.5 h11.5 l3.5 3.5 v10.5 h-15z" fill="#c2d9f3" stroke="#7f9cc0"/><path d="M12 0.5 v3.5 h3.5" fill="#e8f0fa" stroke="#7f9cc0"/><text x="2.2" y="10.9" font-size="7.2" font-weight="bold" font-family="Liberation Sans" fill="#0c2452" letter-spacing="-0.3">123</text></svg>
<div class="t" style="left:435px;top:272px;font-size:12px;color:#222;--w:44px;transform:scaleX(0.9340);transform-origin:0 50%">ATR期間</div>
<div class="t" style="left:674px;top:272px;font-size:12px;color:#222;--w:12.3px;transform:scaleX(0.9207);transform-origin:0 50%">14</div>
<div class="a" style="left:413px;top:288px;width:516px;height:20px;background:#ffffff;border-bottom:1px solid #dadada"></div>
<div class="a" style="left:670px;top:288px;width:1px;height:20px;background:#e2e2e2"></div>
<svg class="a" style="left:415px;top:290px" width="17" height="16"><path d="M0.5 0.5 h11.5 l3.5 3.5 v10.5 h-15z" fill="#c2d9f3" stroke="#7f9cc0"/><path d="M12 0.5 v3.5 h3.5" fill="#e8f0fa" stroke="#7f9cc0"/><text x="2.2" y="10.9" font-size="7.2" font-weight="bold" font-family="Liberation Sans" fill="#0c2452" letter-spacing="-0.3">123</text></svg>
<div class="t" style="left:435px;top:292px;font-size:12px;color:#222;--w:67.8px;transform:scaleX(0.9535);transform-origin:0 50%">ATR適用価格</div>
<div class="t" style="left:674px;top:292px;font-size:12px;color:#222;--w:57px;transform:scaleX(0.9495);transform-origin:0 50%">Close price</div>
<div class="a" style="left:413px;top:308px;width:516px;height:20px;background:#ebebeb;border-bottom:1px solid #dadada"></div>
<div class="a" style="left:670px;top:308px;width:1px;height:20px;background:#e2e2e2"></div>
<svg class="a" style="left:415px;top:310px" width="17" height="16"><path d="M0.5 0.5 h11.5 l3.5 3.5 v10.5 h-15z" fill="#c2d9f3" stroke="#7f9cc0"/><path d="M12 0.5 v3.5 h3.5" fill="#e8f0fa" stroke="#7f9cc0"/><text x="2.2" y="10.9" font-size="7.2" font-weight="bold" font-family="Liberation Sans" fill="#0c2452" letter-spacing="-0.3">123</text></svg>
<div class="t" style="left:435px;top:312px;font-size:12px;color:#222;--w:83px;transform:scaleX(0.9881);transform-origin:0 50%">一目転換線期間</div>
<div class="t" style="left:674px;top:312px;font-size:12px;color:#222;--w:6px;transform:scaleX(0.8972);transform-origin:0 50%">9</div>
<div class="a" style="left:413px;top:328px;width:516px;height:20px;background:#ffffff;border-bottom:1px solid #dadada"></div>
<div class="a" style="left:670px;top:328px;width:1px;height:20px;background:#e2e2e2"></div>
<svg class="a" style="left:415px;top:330px" width="17" height="16"><path d="M0.5 0.5 h11.5 l3.5 3.5 v10.5 h-15z" fill="#c2d9f3" stroke="#7f9cc0"/><path d="M12 0.5 v3.5 h3.5" fill="#e8f0fa" stroke="#7f9cc0"/><text x="2.2" y="10.9" font-size="7.2" font-weight="bold" font-family="Liberation Sans" fill="#0c2452" letter-spacing="-0.3">123</text></svg>
<div class="t" style="left:435px;top:332px;font-size:12px;color:#222;--w:83px;transform:scaleX(0.9881);transform-origin:0 50%">一目基準線期間</div>
<div class="t" style="left:674px;top:332px;font-size:12px;color:#222;--w:12.3px;transform:scaleX(0.9207);transform-origin:0 50%">26</div>
<div class="a" style="left:413px;top:348px;width:516px;height:20px;background:#ebebeb;border-bottom:1px solid #dadada"></div>
<div class="a" style="left:670px;top:348px;width:1px;height:20px;background:#e2e2e2"></div>
<svg class="a" style="left:415px;top:350px" width="17" height="16"><path d="M0.5 0.5 h11.5 l3.5 3.5 v10.5 h-15z" fill="#c2d9f3" stroke="#7f9cc0"/><path d="M12 0.5 v3.5 h3.5" fill="#e8f0fa" stroke="#7f9cc0"/><text x="2.2" y="10.9" font-size="7.2" font-weight="bold" font-family="Liberation Sans" fill="#0c2452" letter-spacing="-0.3">123</text></svg>
<div class="t" style="left:435px;top:352px;font-size:12px;color:#222;--w:106px;transform:scaleX(0.9137);transform-origin:0 50%">一目先行スパンB期間</div>
<div class="t" style="left:674px;top:352px;font-size:12px;color:#222;--w:12.3px;transform:scaleX(0.9207);transform-origin:0 50%">52</div>
<div class="a" style="left:413px;top:368px;width:516px;height:20px;background:#ffffff;border-bottom:1px solid #dadada"></div>
<div class="a" style="left:670px;top:368px;width:1px;height:20px;background:#e2e2e2"></div>
<svg class="a" style="left:415px;top:370px" width="17" height="16"><path d="M0.5 0.5 h11.5 l3.5 3.5 v10.5 h-15z" fill="#c2d9f3" stroke="#7f9cc0"/><path d="M12 0.5 v3.5 h3.5" fill="#e8f0fa" stroke="#7f9cc0"/><text x="2.2" y="10.9" font-size="7.2" font-weight="bold" font-family="Liberation Sans" fill="#0c2452" letter-spacing="-0.3">123</text></svg>
<div class="t" style="left:435px;top:372px;font-size:12px;color:#222;--w:82px;transform:scaleX(0.9839);transform-origin:0 50%">PO短期MA期間</div>
<div class="t" style="left:674px;top:372px;font-size:12px;color:#222;--w:6px;transform:scaleX(0.8972);transform-origin:0 50%">5</div>
<div class="a" style="left:413px;top:388px;width:516px;height:20px;background:#ebebeb;border-bottom:1px solid #dadada"></div>
<div class="a" style="left:670px;top:388px;width:1px;height:20px;background:#e2e2e2"></div>
<svg class="a" style="left:415px;top:390px" width="17" height="16"><path d="M0.5 0.5 h11.5 l3.5 3.5 v10.5 h-15z" fill="#c2d9f3" stroke="#7f9cc0"/><path d="M12 0.5 v3.5 h3.5" fill="#e8f0fa" stroke="#7f9cc0"/><text x="2.2" y="10.9" font-size="7.2" font-weight="bold" font-family="Liberation Sans" fill="#0c2452" letter-spacing="-0.3">123</text></svg>
<div class="t" style="left:435px;top:392px;font-size:12px;color:#222;--w:82px;transform:scaleX(0.9839);transform-origin:0 50%">PO中期MA期間</div>
<div class="t" style="left:674px;top:392px;font-size:12px;color:#222;--w:12.3px;transform:scaleX(0.9207);transform-origin:0 50%">20</div>
<div class="a" style="left:413px;top:408px;width:516px;height:20px;background:#ffffff;border-bottom:1px solid #dadada"></div>
<div class="a" style="left:670px;top:408px;width:1px;height:20px;background:#e2e2e2"></div>
<svg class="a" style="left:415px;top:410px" width="17" height="16"><path d="M0.5 0.5 h11.5 l3.5 3.5 v10.5 h-15z" fill="#c2d9f3" stroke="#7f9cc0"/><path d="M12 0.5 v3.5 h3.5" fill="#e8f0fa" stroke="#7f9cc0"/><text x="2.2" y="10.9" font-size="7.2" font-weight="bold" font-family="Liberation Sans" fill="#0c2452" letter-spacing="-0.3">123</text></svg>
<div class="t" style="left:435px;top:412px;font-size:12px;color:#222;--w:82px;transform:scaleX(0.9839);transform-origin:0 50%">PO長期MA期間</div>
<div class="t" style="left:674px;top:412px;font-size:12px;color:#222;--w:12.3px;transform:scaleX(0.9207);transform-origin:0 50%">75</div>
<div class="a" style="left:413px;top:428px;width:516px;height:20px;background:#ebebeb;border-bottom:1px solid #dadada"></div>
<div class="a" style="left:670px;top:428px;width:1px;height:20px;background:#e2e2e2"></div>
<svg class="a" style="left:415px;top:430px" width="17" height="16"><path d="M0.5 0.5 h11.5 l3.5 3.5 v10.5 h-15z" fill="#c2d9f3" stroke="#7f9cc0"/><path d="M12 0.5 v3.5 h3.5" fill="#e8f0fa" stroke="#7f9cc0"/><text x="2.2" y="10.9" font-size="7.2" font-weight="bold" font-family="Liberation Sans" fill="#0c2452" letter-spacing="-0.3">123</text></svg>
<div class="t" style="left:435px;top:432px;font-size:12px;color:#222;--w:60.7px;transform:scaleX(0.9685);transform-origin:0 50%">PO MA種類</div>
<div class="t" style="left:674px;top:432px;font-size:12px;color:#222;--w:34.6px;transform:scaleX(0.9431);transform-origin:0 50%">Simple</div>
<div class="a" style="left:413px;top:448px;width:516px;height:20px;background:#ffffff;border-bottom:1px solid #dadada"></div>
<div class="a" style="left:670px;top:448px;width:1px;height:20px;background:#e2e2e2"></div>
<svg class="a" style="left:415px;top:450px" width="17" height="16"><path d="M0.5 0.5 h11.5 l3.5 3.5 v10.5 h-15z" fill="#f2e29a" stroke="#c2ad50"/><path d="M12 0.5 v3.5 h3.5" fill="#fbf3c8" stroke="#c2ad50"/><text x="2" y="11" font-size="8.5" font-family="Liberation Sans" fill="#3a3210">ab</text></svg>
<div class="t" style="left:435px;top:452px;font-size:12px;color:#222;--w:59.2px;transform:scaleX(0.9541);transform-origin:0 50%">Category22</div>
<div class="t" style="left:674px;top:452px;font-size:12px;color:#222;--w:201.7px;transform:scaleX(0.9334);transform-origin:0 50%">======ローソク足パターン設定======</div>
<div class="a" style="left:413px;top:468px;width:516px;height:20px;background:#dfeaf6;border-bottom:1px solid #dadada"></div>
<div class="a" style="left:670px;top:468px;width:1px;height:20px;background:#e2e2e2"></div>
<svg class="a" style="left:415px;top:470px" width="17" height="16"><path d="M0.5 0.5 h11.5 l3.5 3.5 v10.5 h-15z" fill="#c2d9f3" stroke="#7f9cc0"/><path d="M12 0.5 v3.5 h3.5" fill="#e8f0fa" stroke="#7f9cc0"/><text x="2.2" y="10.9" font-size="7.2" font-weight="bold" font-family="Liberation Sans" fill="#0c2452" letter-spacing="-0.3">123</text></svg>
<div class="t" style="left:435px;top:472px;font-size:12px;color:#222;--w:147.8px;transform:scaleX(0.7698);transform-origin:0 50%">買いエントリーローソク足パターン</div>
<div class="a" style="left:413px;top:488px;width:516px;height:20px;background:#ffffff;border-bottom:1px solid #dadada"></div>
<div class="a" style="left:670px;top:488px;width:1px;height:20px;background:#e2e2e2"></div>
<svg class="a" style="left:415px;top:490px" width="17" height="16"><path d="M0.5 0.5 h11.5 l3.5 3.5 v10.5 h-15z" fill="#c2d9f3" stroke="#7f9cc0"/><path d="M12 0.5 v3.5 h3.5" fill="#e8f0fa" stroke="#7f9cc0"/><text x="2.2" y="10.9" font-size="7.2" font-weight="bold" font-family="Liberation Sans" fill="#0c2452" letter-spacing="-0.3">123</text></svg>
<div class="t" style="left:435px;top:492px;font-size:12px;color:#222;--w:210px;transform:scaleX(0.8947);transform-origin:0 50%">買いパターン確認シフト（0=現在,1=確定）</div>
<div class="a" style="left:413px;top:508px;width:516px;height:20px;background:#ebebeb;border-bottom:1px solid #dadada"></div>
<div class="a" style="left:670px;top:508px;width:1px;height:20px;background:#e2e2e2"></div>
<svg class="a" style="left:415px;top:510px" width="17" height="16"><path d="M0.5 0.5 h11.5 l3.5 3.5 v10.5 h-15z" fill="#c2d9f3" stroke="#7f9cc0"/><path d="M12 0.5 v3.5 h3.5" fill="#e8f0fa" stroke="#7f9cc0"/><text x="2.2" y="10.9" font-size="7.2" font-weight="bold" font-family="Liberation Sans" fill="#0c2452" letter-spacing="-0.3">123</text></svg>
<div class="t" style="left:435px;top:512px;font-size:12px;color:#222;--w:145px;transform:scaleX(0.7552);transform-origin:0 50%">売りエントリーローソク足パターン</div>
<div class="a" style="left:413px;top:528px;width:516px;height:20px;background:#ffffff;border-bottom:1px solid #dadada"></div>
<div class="a" style="left:670px;top:528px;width:1px;height:20px;background:#e2e2e2"></div>
<svg class="a" style="left:415px;top:530px" width="17" height="16"><path d="M0.5 0.5 h11.5 l3.5 3.5 v10.5 h-15z" fill="#c2d9f3" stroke="#7f9cc0"/><path d="M12 0.5 v3.5 h3.5" fill="#e8f0fa" stroke="#7f9cc0"/><text x="2.2" y="10.9" font-size="7.2" font-weight="bold" font-family="Liberation Sans" fill="#0c2452" letter-spacing="-0.3">123</text></svg>
<div class="t" style="left:435px;top:532px;font-size:12px;color:#222;--w:208px;transform:scaleX(0.8862);transform-origin:0 50%">売りパターン確認シフト（0=現在,1=確定）</div>
<div class="a" style="left:413px;top:548px;width:516px;height:20px;background:#ebebeb;border-bottom:1px solid #dadada"></div>
<div class="a" style="left:670px;top:548px;width:1px;height:20px;background:#e2e2e2"></div>
<svg class="a" style="left:415px;top:550px" width="17" height="16"><path d="M0.5 0.5 h11.5 l3.5 3.5 v10.5 h-15z" fill="#c2d9f3" stroke="#7f9cc0"/><path d="M12 0.5 v3.5 h3.5" fill="#e8f0fa" stroke="#7f9cc0"/><text x="2.2" y="10.9" font-size="7.2" font-weight="bold" font-family="Liberation Sans" fill="#0c2452" letter-spacing="-0.3">123</text></svg>
<div class="t" style="left:435px;top:552px;font-size:12px;color:#222;--w:128.6px;transform:scaleX(0.8244);transform-origin:0 50%">決済買いローソク足パターン</div>
<div class="a" style="left:413px;top:568px;width:516px;height:20px;background:#ffffff;border-bottom:1px solid #dadada"></div>
<div class="a" style="left:670px;top:568px;width:1px;height:20px;background:#e2e2e2"></div>
<svg class="a" style="left:415px;top:570px" width="17" height="16"><path d="M0.5 0.5 h11.5 l3.5 3.5 v10.5 h-15z" fill="#c2d9f3" stroke="#7f9cc0"/><path d="M12 0.5 v3.5 h3.5" fill="#e8f0fa" stroke="#7f9cc0"/><text x="2.2" y="10.9" font-size="7.2" font-weight="bold" font-family="Liberation Sans" fill="#0c2452" letter-spacing="-0.3">123</text></svg>
<div class="t" style="left:435px;top:572px;font-size:12px;color:#222;--w:127px;transform:scaleX(0.8141);transform-origin:0 50%">決済売りローソク足パターン</div>
<div class="a" style="left:413px;top:588px;width:516px;height:20px;background:#ebebeb;border-bottom:1px solid #dadada"></div>
<div class="a" style="left:670px;top:588px;width:1px;height:20px;background:#e2e2e2"></div>
<svg class="a" style="left:415px;top:590px" width="17" height="16"><path d="M0.5 0.5 h11.5 l3.5 3.5 v10.5 h-15z" fill="#b8e6f2" stroke="#62aac4"/><path d="M12 0.5 v3.5 h3.5" fill="#e4f6fb" stroke="#62aac4"/><text x="2.2" y="9" font-size="7" font-family="Liberation Sans" fill="#1e4e66">1</text><path d="M5.5 11 L8.5 3.5" stroke="#1e4e66" stroke-width="0.8"/><text x="7.5" y="12.5" font-size="6.5" font-family="Liberation Sans" fill="#1e4e66">2</text></svg>
<div class="t" style="left:435px;top:592px;font-size:12px;color:#222;--w:182px;transform:scaleX(0.9927);transform-origin:0 50%">大陽線/大陰線の実体比率（最小）</div>
<div class="a" style="left:413px;top:608px;width:516px;height:20px;background:#ffffff;border-bottom:1px solid #dadada"></div>
<div class="a" style="left:670px;top:608px;width:1px;height:20px;background:#e2e2e2"></div>
<svg class="a" style="left:415px;top:610px" width="17" height="16"><path d="M0.5 0.5 h11.5 l3.5 3.5 v10.5 h-15z" fill="#b8e6f2" stroke="#62aac4"/><path d="M12 0.5 v3.5 h3.5" fill="#e4f6fb" stroke="#62aac4"/><text x="2.2" y="9" font-size="7" font-family="Liberation Sans" fill="#1e4e66">1</text><path d="M5.5 11 L8.5 3.5" stroke="#1e4e66" stroke-width="0.8"/><text x="7.5" y="12.5" font-size="6.5" font-family="Liberation Sans" fill="#1e4e66">2</text></svg>
<div class="t" style="left:435px;top:612px;font-size:12px;color:#222;--w:132px;transform:scaleX(0.9818);transform-origin:0 50%">大陽線/大陰線のATR倍率</div>
<div class="a" style="left:413px;top:628px;width:516px;height:20px;background:#ebebeb;border-bottom:1px solid #dadada"></div>
<div class="a" style="left:670px;top:628px;width:1px;height:20px;background:#e2e2e2"></div>
<svg class="a" style="left:415px;top:630px" width="17" height="16"><path d="M0.5 0.5 h11.5 l3.5 3.5 v10.5 h-15z" fill="#b8e6f2" stroke="#62aac4"/><path d="M12 0.5 v3.5 h3.5" fill="#e4f6fb" stroke="#62aac4"/><text x="2.2" y="9" font-size="7" font-family="Liberation Sans" fill="#1e4e66">1</text><path d="M5.5 11 L8.5 3.5" stroke="#1e4e66" stroke-width="0.8"/><text x="7.5" y="12.5" font-size="6.5" font-family="Liberation Sans" fill="#1e4e66">2</text></svg>
<div class="t" style="left:435px;top:632px;font-size:12px;color:#222;--w:110.5px;transform:scaleX(0.8371);transform-origin:0 50%">ハンマー系の下ヒゲ比率</div>
<div class="a" style="left:413px;top:648px;width:516px;height:20px;background:#ffffff;border-bottom:1px solid #dadada"></div>
<div class="a" style="left:670px;top:648px;width:1px;height:20px;background:#e2e2e2"></div>
<svg class="a" style="left:415px;top:650px" width="17" height="16"><path d="M0.5 0.5 h11.5 l3.5 3.5 v10.5 h-15z" fill="#b8e6f2" stroke="#62aac4"/><path d="M12 0.5 v3.5 h3.5" fill="#e4f6fb" stroke="#62aac4"/><text x="2.2" y="9" font-size="7" font-family="Liberation Sans" fill="#1e4e66">1</text><path d="M5.5 11 L8.5 3.5" stroke="#1e4e66" stroke-width="0.8"/><text x="7.5" y="12.5" font-size="6.5" font-family="Liberation Sans" fill="#1e4e66">2</text></svg>
<div class="t" style="left:435px;top:652px;font-size:12px;color:#222;--w:152.7px;transform:scaleX(0.9089);transform-origin:0 50%">ハンマー系の実体比率（最大）</div>
<!-- right-side buttons -->
<div class="a" style="left:957px;top:621px;width:120px;height:24px;border:1px solid #d0d0d0;border-radius:4px;background:#fdfdfd"></div>
<div class="t" style="left:987px;top:627px;font-size:12px;color:#1a1a1a;--w:61.4px;transform:scaleX(0.9303);transform-origin:0 50%">読み込み (L)</div>
<div class="a" style="left:957px;top:658px;width:120px;height:24px;border:1px solid #d0d0d0;border-radius:4px;background:#fdfdfd"></div>
<div class="t" style="left:998px;top:664px;font-size:12px;color:#1a1a1a;--w:39.3px;transform:scaleX(0.9067);transform-origin:0 50%">保存 (S)</div>
<div class="a" style="left:401px;top:693px;width:687px;height:1px;background:#e4e4e4"></div>
<div class="a" style="left:820px;top:695px;width:78px;height:24px;border:1px solid #d0d0d0;border-radius:4px;background:#fdfdfd"></div>
<div class="a" style="left:905px;top:695px;width:85px;height:24px;border:1px solid #d0d0d0;border-radius:4px;background:#fdfdfd"></div>
<div class="t" style="left:929px;top:700px;font-size:12px;color:#1a1a1a;--w:43px;transform:scaleX(0.7167);transform-origin:0 50%">キャンセル</div>
<div class="a" style="left:999px;top:695px;width:85px;height:24px;border:1px solid #d0d0d0;border-radius:4px;background:#fdfdfd"></div>
<div class="t" style="left:1024px;top:700px;font-size:12px;color:#1a1a1a;--w:33.6px;transform:scaleX(0.7000);transform-origin:0 50%">リセット</div>
<svg class="a" style="left:1082px;top:716px" width="8" height="8"><g fill="#b0b0b0"><rect x="5" y="1" width="1" height="1"/><rect x="3" y="3" width="1" height="1"/><rect x="5" y="3" width="1" height="1"/><rect x="1" y="5" width="1" height="1"/><rect x="3" y="5" width="1" height="1"/><rect x="5" y="5" width="1" height="1"/></g></svg>
<!-- combo -->
<div class="a" style="left:671px;top:468px;width:258px;height:23px;border:1px solid #4f88cf;background:linear-gradient(#dbeaf8,#c9dff4)"></div>
<div class="t" style="left:676px;top:473px;font-size:12px;color:#222;--w:50px;transform:scaleX(0.8333);transform-origin:0 50%">使用しない</div>
<svg class="a" style="left:914px;top:475px" width="11" height="8"><path d="M1 1.5 L5.5 6 L10 1.5" fill="none" stroke="#777" stroke-width="1.1"/></svg>
<!-- dropdown list -->
<div class="a" style="left:673px;top:493px;width:259px;height:273px;background:rgba(0,0,0,0.3);filter:blur(2px)"></div>
<div class="a" style="left:671px;top:490px;width:258px;height:273px;background:#fff;border:1px solid #2c3a58;border-top:none"></div>
<div class="a" style="left:672px;top:491px;width:256px;height:15px;background:#3077cd"></div>
<div style="position:absolute;left:0;top:0;font-size:12px;line-height:1">
 <div class="t" style="left:675px;top:492.5px;color:#fff;--w:50px;transform:scaleX(0.8333);transform-origin:0 50%">使用しない</div>
 <div class="t" style="left:675px;top:507.5px;color:#222;--w:34.8px;transform:scaleX(0.9667);transform-origin:0 50%">十字線</div>
 <div class="t" style="left:675px;top:522.5px;color:#222;--w:34.8px;transform:scaleX(0.9667);transform-origin:0 50%">大陽線</div>
 <div class="t" style="left:675px;top:537.5px;color:#222;--w:34.8px;transform:scaleX(0.9667);transform-origin:0 50%">大陰線</div>
 <div class="t" style="left:675px;top:552.5px;color:#222;--w:92.5px;transform:scaleX(0.7708);transform-origin:0 50%">カラカサ（ハンマー）</div>
 <div class="t" style="left:675px;top:567.5px;color:#222;--w:142.5px;transform:scaleX(0.7422);transform-origin:0 50%">トンカチ（シューティングスター）</div>
 <div class="t" style="left:675px;top:582.5px;color:#222;--w:26px;transform:scaleX(0.7222);transform-origin:0 50%">トンボ</div>
 <div class="t" style="left:675px;top:597.5px;color:#222;--w:26px;transform:scaleX(0.7222);transform-origin:0 50%">トウバ</div>
 <div class="t" style="left:675px;top:612.5px;color:#222;--w:78.5px;transform:scaleX(0.9345);transform-origin:0 50%">包み足（買い）</div>
 <div class="t" style="left:675px;top:627.5px;color:#222;--w:78.5px;transform:scaleX(0.9345);transform-origin:0 50%">包み足（売り）</div>
 <div class="t" style="left:675px;top:642.5px;color:#222;--w:85.5px;transform:scaleX(0.8906);transform-origin:0 50%">はらみ足（買い）</div>
 <div class="t" style="left:675px;top:657.5px;color:#222;--w:85.5px;transform:scaleX(0.8906);transform-origin:0 50%">はらみ足（売り）</div>
 <div class="t" style="left:675px;top:672.5px;color:#222;--w:54px;transform:scaleX(0.9000);transform-origin:0 50%">明けの明星</div>
 <div class="t" style="left:675px;top:687.5px;color:#222;--w:44.5px;transform:scaleX(0.9271);transform-origin:0 50%">宵の明星</div>
 <div class="t" style="left:675px;top:702.5px;color:#222;--w:34.8px;transform:scaleX(0.9667);transform-origin:0 50%">赤三兵</div>
 <div class="t" style="left:675px;top:717.5px;color:#222;--w:34.8px;transform:scaleX(0.9667);transform-origin:0 50%">三羽烏</div>
 <div class="t" style="left:675px;top:732.5px;color:#222;--w:43.5px;transform:scaleX(0.9062);transform-origin:0 50%">毛抜き底</div>
 <div class="t" style="left:675px;top:747.5px;color:#222;--w:55.6px;transform:scaleX(0.9267);transform-origin:0 50%">毛抜き天井</div>
</div>

<!-- bottom tabs -->
<div class="a tabs" style="left:0;top:957px;width:1622px;height:21px;background:#f0f0f0">
</div>
<div class="tabs">
 <div class="t" style="left:11px;--w:66px;transform:scaleX(0.9934);transform-origin:0 50%">CADJPY,M15</div>
 <div class="sp" style="left:88px"></div>
 <div class="t" style="left:99px;--w:64px;transform:scaleX(0.9877);transform-origin:0 50%">USDCAD,M1</div>
 <div class="sp" style="left:176px"></div>
 <div class="t" style="left:187px;--w:61.2px;transform:scaleX(0.9626);transform-origin:0 50%">GBPUSD,H1</div>
 <div class="sp" style="left:260px"></div>
 <div class="t" style="left:271px;--w:66px;transform:scaleX(0.9934);transform-origin:0 50%">CADJPY,M15</div>
 <div class="a" style="left:348px;top:956px;width:92px;height:19px;background:#fff;border:1px solid #2a2a2a;border-top:none;border-bottom:2px solid #222"></div>
 <div class="t" style="left:361px;color:#333;--w:66px;transform:scaleX(0.9496);transform-origin:0 50%">EURGBP,M30</div>
 <div class="t" style="left:453px;--w:66px;transform:scaleX(0.9496);transform-origin:0 50%">EURGBP,M30</div>
 <div class="sp" style="left:532px"></div>
 <div class="t" style="left:543px;--w:65px;transform:scaleX(0.9781);transform-origin:0 50%">GBPJPY,M15</div>
 <div class="sp" style="left:620px"></div>
 <svg class="a" style="left:1590px;top:960px" width="30" height="10"><path d="M7 1 L3 5 L7 9z M21 1 L25 5 L21 9z" fill="#9a9a9a"/></svg>
</div>

</body></html>
